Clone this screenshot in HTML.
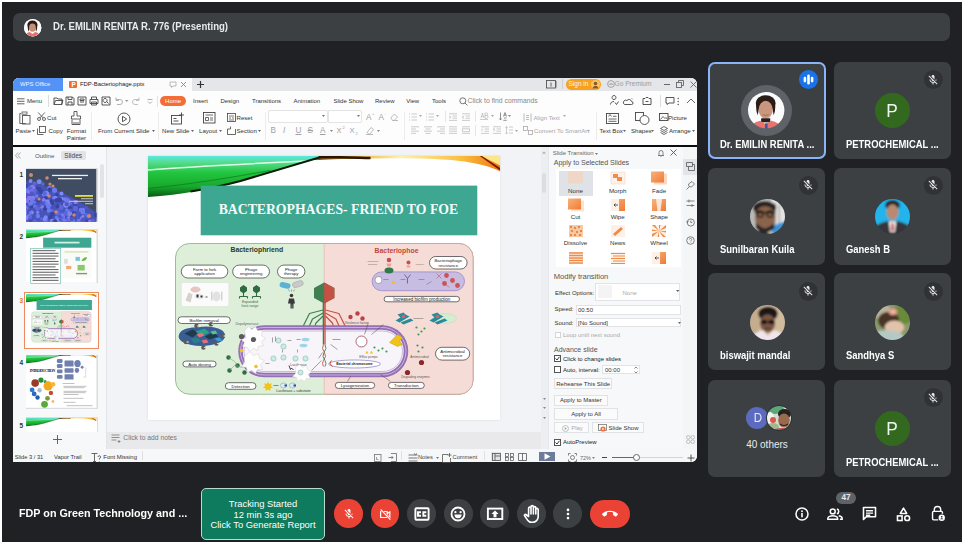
<!DOCTYPE html>
<html><head><meta charset="utf-8">
<style>
*{margin:0;padding:0;box-sizing:border-box}
html,body{width:964px;height:544px;overflow:hidden;background:#fff;font-family:"Liberation Sans",sans-serif}
.a{position:absolute}
.t{position:absolute;white-space:nowrap;line-height:1}
svg{position:absolute;overflow:visible}
</style></head>
<body>
<div class="a" style="left:2px;top:2px;width:960px;height:540px;background:#202124;"></div>
<div class="a" style="left:13px;top:13px;width:937px;height:28px;background:#3c4043;border-radius:7px;"></div>
<svg style="left:24.2px;top:18.8px" width="17.4" height="17.4" viewBox="0 0 36 36">
<defs><clipPath id="ca0"><circle cx="18" cy="18" r="18"/></clipPath></defs>
<circle cx="18" cy="18" r="18" fill="#fff"/>
<g clip-path="url(#ca0)"><rect x="-2" y="-2" width="40" height="40" fill="#fbfbfb"/>
<ellipse cx="17.5" cy="12" rx="10.5" ry="9" fill="#2a1a16"/>
<path d="M8 12 Q7 22 10 26 L12 16Z M27 12 Q28 22 25 26 L23 16Z" fill="#2a1a16"/>
<ellipse cx="17.5" cy="18" rx="7" ry="8.5" fill="#c38f78"/>
<path d="M2 38 Q4 28 12 27 L17.5 31 L23 27 Q32 28 34 38Z" fill="#e8716c"/></g></svg>
<div class="t" style="left:52.50px;top:20.77px;font-size:10.9px;color:#e8eaed;font-weight:bold;transform:scaleX(0.882);transform-origin:0 0;">Dr. EMILIN RENITA R. 776 (Presenting)</div>
<div class="a" style="left:708px;top:62px;width:118px;height:97px;background:#3c4043;border-radius:7px;border:2px solid #8ab4f8;"></div>
<div class="a" style="left:834px;top:62px;width:117px;height:97px;background:#3c4043;border-radius:7px;"></div>
<div class="a" style="left:708px;top:168px;width:117px;height:97px;background:#3c4043;border-radius:7px;"></div>
<div class="a" style="left:834px;top:168px;width:117px;height:97px;background:#3c4043;border-radius:7px;"></div>
<div class="a" style="left:708px;top:273px;width:117px;height:97px;background:#3c4043;border-radius:7px;"></div>
<div class="a" style="left:834px;top:273px;width:117px;height:97px;background:#3c4043;border-radius:7px;"></div>
<div class="a" style="left:708px;top:380px;width:117px;height:97px;background:#3c4043;border-radius:7px;"></div>
<div class="a" style="left:834px;top:380px;width:117px;height:97px;background:#3c4043;border-radius:7px;"></div>
<div class="a" style="left:798.5px;top:69.5px;width:19px;height:19px;border-radius:50%;background:#1a73e8"></div>
<svg style="left:798.5px;top:69.5px" width="19" height="19"><rect x="4.6" y="6.8" width="2.6" height="5.6" rx="1.3" fill="#fff"/><rect x="8.2" y="4.6" width="2.6" height="10" rx="1.3" fill="#fff"/><rect x="11.8" y="6.8" width="2.6" height="5.6" rx="1.3" fill="#fff"/></svg>
<div class="a" style="left:923.7px;top:70.0px;width:19px;height:19px;border-radius:50%;background:#303235"></div>
<svg style="left:927.2px;top:73.5px" width="12" height="12" viewBox="0 0 24 24"><path fill="#e8eaed" d="M19 11h-1.7c0 .74-.16 1.43-.43 2.05l1.23 1.23c.56-.98.9-2.09.9-3.28zm-4.02.17c0-.06.02-.11.02-.17V5c0-1.66-1.34-3-3-3S9 3.34 9 5v.18l5.98 5.99zM4.27 3L3 4.27l6.01 6.01V11c0 1.66 1.33 3 2.99 3 .22 0 .44-.03.65-.08l1.66 1.66c-.71.33-1.5.52-2.31.52-2.76 0-5.3-2.1-5.3-5.1H5c0 3.41 2.72 6.23 6 6.72V21h2v-3.28c.91-.13 1.77-.45 2.54-.9L19.73 21 21 19.73 4.27 3z"/></svg>
<div class="a" style="left:798.7px;top:175.7px;width:19px;height:19px;border-radius:50%;background:#303235"></div>
<svg style="left:802.2px;top:179.2px" width="12" height="12" viewBox="0 0 24 24"><path fill="#e8eaed" d="M19 11h-1.7c0 .74-.16 1.43-.43 2.05l1.23 1.23c.56-.98.9-2.09.9-3.28zm-4.02.17c0-.06.02-.11.02-.17V5c0-1.66-1.34-3-3-3S9 3.34 9 5v.18l5.98 5.99zM4.27 3L3 4.27l6.01 6.01V11c0 1.66 1.33 3 2.99 3 .22 0 .44-.03.65-.08l1.66 1.66c-.71.33-1.5.52-2.31.52-2.76 0-5.3-2.1-5.3-5.1H5c0 3.41 2.72 6.23 6 6.72V21h2v-3.28c.91-.13 1.77-.45 2.54-.9L19.73 21 21 19.73 4.27 3z"/></svg>
<div class="a" style="left:923.7px;top:175.7px;width:19px;height:19px;border-radius:50%;background:#303235"></div>
<svg style="left:927.2px;top:179.2px" width="12" height="12" viewBox="0 0 24 24"><path fill="#e8eaed" d="M19 11h-1.7c0 .74-.16 1.43-.43 2.05l1.23 1.23c.56-.98.9-2.09.9-3.28zm-4.02.17c0-.06.02-.11.02-.17V5c0-1.66-1.34-3-3-3S9 3.34 9 5v.18l5.98 5.99zM4.27 3L3 4.27l6.01 6.01V11c0 1.66 1.33 3 2.99 3 .22 0 .44-.03.65-.08l1.66 1.66c-.71.33-1.5.52-2.31.52-2.76 0-5.3-2.1-5.3-5.1H5c0 3.41 2.72 6.23 6 6.72V21h2v-3.28c.91-.13 1.77-.45 2.54-.9L19.73 21 21 19.73 4.27 3z"/></svg>
<div class="a" style="left:798.7px;top:281.5px;width:19px;height:19px;border-radius:50%;background:#303235"></div>
<svg style="left:802.2px;top:285px" width="12" height="12" viewBox="0 0 24 24"><path fill="#e8eaed" d="M19 11h-1.7c0 .74-.16 1.43-.43 2.05l1.23 1.23c.56-.98.9-2.09.9-3.28zm-4.02.17c0-.06.02-.11.02-.17V5c0-1.66-1.34-3-3-3S9 3.34 9 5v.18l5.98 5.99zM4.27 3L3 4.27l6.01 6.01V11c0 1.66 1.33 3 2.99 3 .22 0 .44-.03.65-.08l1.66 1.66c-.71.33-1.5.52-2.31.52-2.76 0-5.3-2.1-5.3-5.1H5c0 3.41 2.72 6.23 6 6.72V21h2v-3.28c.91-.13 1.77-.45 2.54-.9L19.73 21 21 19.73 4.27 3z"/></svg>
<div class="a" style="left:923.7px;top:281.5px;width:19px;height:19px;border-radius:50%;background:#303235"></div>
<svg style="left:927.2px;top:285px" width="12" height="12" viewBox="0 0 24 24"><path fill="#e8eaed" d="M19 11h-1.7c0 .74-.16 1.43-.43 2.05l1.23 1.23c.56-.98.9-2.09.9-3.28zm-4.02.17c0-.06.02-.11.02-.17V5c0-1.66-1.34-3-3-3S9 3.34 9 5v.18l5.98 5.99zM4.27 3L3 4.27l6.01 6.01V11c0 1.66 1.33 3 2.99 3 .22 0 .44-.03.65-.08l1.66 1.66c-.71.33-1.5.52-2.31.52-2.76 0-5.3-2.1-5.3-5.1H5c0 3.41 2.72 6.23 6 6.72V21h2v-3.28c.91-.13 1.77-.45 2.54-.9L19.73 21 21 19.73 4.27 3z"/></svg>
<div class="a" style="left:923.7px;top:388.0px;width:19px;height:19px;border-radius:50%;background:#303235"></div>
<svg style="left:927.2px;top:391.5px" width="12" height="12" viewBox="0 0 24 24"><path fill="#e8eaed" d="M19 11h-1.7c0 .74-.16 1.43-.43 2.05l1.23 1.23c.56-.98.9-2.09.9-3.28zm-4.02.17c0-.06.02-.11.02-.17V5c0-1.66-1.34-3-3-3S9 3.34 9 5v.18l5.98 5.99zM4.27 3L3 4.27l6.01 6.01V11c0 1.66 1.33 3 2.99 3 .22 0 .44-.03.65-.08l1.66 1.66c-.71.33-1.5.52-2.31.52-2.76 0-5.3-2.1-5.3-5.1H5c0 3.41 2.72 6.23 6 6.72V21h2v-3.28c.91-.13 1.77-.45 2.54-.9L19.73 21 21 19.73 4.27 3z"/></svg>
<div class="a" style="left:741px;top:85px;width:51px;height:51px;border-radius:50%;background:#5f6368"></div>
<svg style="left:748.2px;top:92.2px" width="36.4" height="36.4" viewBox="0 0 36 36">
<defs><clipPath id="ca1"><circle cx="18" cy="18" r="18"/></clipPath><filter id="bl1"><feGaussianBlur stdDeviation="0.6"/></filter></defs>
<g clip-path="url(#ca1)"><g filter="url(#bl1)"><rect x="-2" y="-2" width="40" height="40" fill="#fbfbfb"/>
<ellipse cx="17.5" cy="11" rx="9.8" ry="7.8" fill="#2a1a16"/>
<path d="M8.2 11 Q7.5 18 9.5 23 L11.5 14Z M26.8 11 Q27.5 18 25.5 23 L23.5 14Z" fill="#2a1a16"/>
<ellipse cx="17.5" cy="17.5" rx="7" ry="8.8" fill="#c9977e"/>
<path d="M14.5 22.5q3 1.2 6 0" stroke="#9a5a50" stroke-width="0.8" fill="none"/>
<path d="M13 26h9v4h-9z" fill="#2a1a16"/>
<path d="M1 38 Q3 30 12 28.5 L17.5 32 L23 28.5 Q32 30 35 38Z" fill="#e9736e"/>
<rect x="16.8" y="31" width="2.6" height="7" fill="#4456a0"/></g></g></svg>
<div class="a" style="left:874.5px;top:92.5px;width:35px;height:35px;border-radius:50%;background:#33691e"></div>
<div class="t" style="left:592.00px;width:600px;text-align:center;top:100.75px;font-size:19.2px;color:#f1f3f4;transform:scaleX(0.9);">P</div>
<div class="a" style="left:874.5px;top:410.5px;width:35px;height:35px;border-radius:50%;background:#33691e"></div>
<div class="t" style="left:592.00px;width:600px;text-align:center;top:418.75px;font-size:19.2px;color:#f1f3f4;transform:scaleX(0.9);">P</div>
<svg style="left:749.5px;top:198.5px" width="35" height="35" viewBox="0 0 36 36">
<defs><clipPath id="ca2"><circle cx="18" cy="18" r="18"/></clipPath><filter id="bl" x="-10%" y="-10%" width="120%" height="120%"><feGaussianBlur stdDeviation="0.9"/></filter></defs>
<g clip-path="url(#ca2)"><g filter="url(#bl)"><rect x="-2" y="-2" width="40" height="40" fill="#b9b9b7"/>
<rect x="22" y="-2" width="16" height="30" fill="#e4e4e2"/>
<path d="M26 4v22M30 6v20" stroke="#9a9a9a" stroke-width="1.2"/>
<path d="M22 28 L38 22 L38 38 L24 38Z" fill="#3a92d8"/>
<ellipse cx="15" cy="9" rx="12" ry="7" fill="#2a2420"/>
<ellipse cx="15.5" cy="19" rx="10.5" ry="11.5" fill="#8a644c"/>
<path d="M5 14h21" stroke="#161210" stroke-width="1.6"/>
<circle cx="10.5" cy="15.5" r="3.2" fill="none" stroke="#161210" stroke-width="1.3"/><circle cx="20.5" cy="15.5" r="3.2" fill="none" stroke="#161210" stroke-width="1.3"/>
<path d="M6 24 Q15.5 36 25 24 L25 30 Q15.5 38 6 30Z" fill="#2a221e"/>
<path d="M2 38 Q8 31 15 32 L22 38Z" fill="#2a2a30"/></g></g></svg>
<svg style="left:874.5px;top:198.5px" width="35" height="35" viewBox="0 0 36 36">
<defs><clipPath id="ca3"><circle cx="18" cy="18" r="18"/></clipPath><filter id="bl" x="-10%" y="-10%" width="120%" height="120%"><feGaussianBlur stdDeviation="0.9"/></filter></defs>
<g clip-path="url(#ca3)"><g filter="url(#bl)"><rect x="-2" y="-2" width="40" height="40" fill="#22b4ea"/>

<ellipse cx="18" cy="6.5" rx="7.5" ry="5.5" fill="#262222"/>
<ellipse cx="18" cy="13.5" rx="6.2" ry="8" fill="#b98a70"/>
<path d="M-2 38 L-2 30 Q4 24.5 13 22.5 L23 22.5 Q32 24.5 38 30 L38 38Z" fill="#35363a"/>
<path d="M14 23 L22 23 L20.5 34 L15.5 34Z" fill="#f2eeee"/>
<path d="M17 25 L19 25 L19.5 33 L16.5 33Z" fill="#c8343a"/></g></g></svg>
<svg style="left:749.5px;top:304.5px" width="35" height="35" viewBox="0 0 36 36">
<defs><clipPath id="ca4"><circle cx="18" cy="18" r="18"/></clipPath><filter id="bl" x="-10%" y="-10%" width="120%" height="120%"><feGaussianBlur stdDeviation="0.9"/></filter></defs>
<g clip-path="url(#ca4)"><g filter="url(#bl)"><rect x="-2" y="-2" width="40" height="40" fill="#d2bb9c"/>
<path d="M-2 -2 L12 -2 L8 38 L-2 38Z" fill="#c4ad8e"/>
<ellipse cx="18.5" cy="9" rx="10" ry="7.5" fill="#1c1818"/>
<ellipse cx="18" cy="19" rx="7.8" ry="9.5" fill="#7a5644"/>
<ellipse cx="14.5" cy="17.5" rx="3.3" ry="2.3" fill="#121010"/><ellipse cx="22" cy="17.5" rx="3.3" ry="2.3" fill="#121010"/>
<path d="M15 24h6" stroke="#2a1a18" stroke-width="1"/>
<path d="M-2 38 Q4 27 14 26 L18 32 L24 26 Q34 27 38 38Z" fill="#f0e6ea"/></g></g></svg>
<svg style="left:874.5px;top:304.5px" width="35" height="35" viewBox="0 0 36 36">
<defs><clipPath id="ca5"><circle cx="18" cy="18" r="18"/></clipPath><filter id="bl" x="-10%" y="-10%" width="120%" height="120%"><feGaussianBlur stdDeviation="0.9"/></filter></defs>
<g clip-path="url(#ca5)"><g filter="url(#bl)"><rect x="-2" y="-2" width="40" height="40" fill="#8a9a6a"/>
<ellipse cx="28" cy="10" rx="12" ry="10" fill="#6a8a3a"/>
<ellipse cx="6" cy="6" rx="10" ry="8" fill="#b8b49a"/>
<ellipse cx="14" cy="16" rx="11" ry="9" fill="#4a3428"/>
<ellipse cx="20" cy="23" rx="10" ry="7" fill="#e2c2aa"/>
<ellipse cx="12" cy="34" rx="18" ry="8" fill="#b5c9c4"/>
<ellipse cx="18.5" cy="7" rx="4.5" ry="3.5" fill="#e49a8a"/><ellipse cx="18.5" cy="7" rx="2" ry="1.5" fill="#f4c0b0"/></g></g></svg>
<div class="a" style="left:746px;top:407px;width:22px;height:22px;border-radius:50%;background:#5c6bc0"></div>
<div class="t" style="left:457.50px;width:600px;text-align:center;top:412.13px;font-size:12.6px;color:#e8eaed;transform:scaleX(0.92);">D</div>
<svg style="left:766px;top:405px" width="26" height="26" viewBox="0 0 26 26">
<defs><clipPath id="ca6"><circle cx="13" cy="13" r="12"/></clipPath><filter id="bl2"><feGaussianBlur stdDeviation="0.7"/></filter></defs>
<circle cx="13" cy="13" r="13" fill="#2e3134"/>
<g clip-path="url(#ca6)"><g filter="url(#bl2)"><rect x="-2" y="-2" width="30" height="30" fill="#d6dbd2"/>
<ellipse cx="9" cy="4" rx="9" ry="5" fill="#5aa878"/>
<ellipse cx="4" cy="13" rx="4" ry="6" fill="#f2f2ee"/>
<ellipse cx="7" cy="15" rx="3" ry="3" fill="#d8584a"/>
<ellipse cx="7" cy="22" rx="6" ry="4" fill="#a0b890"/>
<ellipse cx="18.5" cy="9" rx="6.5" ry="5" fill="#262020"/>
<ellipse cx="18" cy="15.5" rx="5.8" ry="7" fill="#9a6a50"/>
<path d="M14 19q4 3 8 0" stroke="#3a2a22" stroke-width="1.2" fill="none"/>
<ellipse cx="16" cy="27" rx="10" ry="4" fill="#b8505a"/></g></g></svg>
<div class="t" style="left:719.50px;top:138.53px;font-size:10.6px;color:#fff;font-weight:bold;transform:scaleX(0.891);transform-origin:0 0;">Dr. EMILIN RENITA ...</div>
<div class="t" style="left:845.50px;top:138.53px;font-size:10.6px;color:#fff;font-weight:bold;transform:scaleX(0.891);transform-origin:0 0;">PETROCHEMICAL ...</div>
<div class="t" style="left:719.50px;top:244.03px;font-size:10.6px;color:#fff;font-weight:bold;transform:scaleX(0.891);transform-origin:0 0;">Sunilbaran Kuila</div>
<div class="t" style="left:845.50px;top:244.03px;font-size:10.6px;color:#fff;font-weight:bold;transform:scaleX(0.891);transform-origin:0 0;">Ganesh B</div>
<div class="t" style="left:719.50px;top:350.03px;font-size:10.6px;color:#fff;font-weight:bold;transform:scaleX(0.891);transform-origin:0 0;">biswajit mandal</div>
<div class="t" style="left:845.50px;top:350.03px;font-size:10.6px;color:#fff;font-weight:bold;transform:scaleX(0.891);transform-origin:0 0;">Sandhya S</div>
<div class="t" style="left:467.00px;width:600px;text-align:center;top:439.54px;font-size:10px;color:#e8eaed;">40 others</div>
<div class="t" style="left:845.50px;top:456.53px;font-size:10.6px;color:#fff;font-weight:bold;transform:scaleX(0.891);transform-origin:0 0;">PETROCHEMICAL ...</div>
<div class="t" style="left:19.40px;top:507.79px;font-size:11px;color:#fff;font-weight:bold;transform:scaleX(0.978);transform-origin:0 0;">FDP on Green Technology and ...</div>
<div class="a" style="left:201px;top:488px;width:124px;height:52px;background:#0e7a5e;border:1px solid #b5dccd;border-radius:5px;"></div>
<div class="t" style="left:-37.00px;width:600px;text-align:center;top:499.04px;font-size:9.4px;color:#fff;">Tracking Started</div>
<div class="t" style="left:-37.00px;width:600px;text-align:center;top:509.54px;font-size:9.4px;color:#fff;">12 min 3s ago</div>
<div class="t" style="left:-37.00px;width:600px;text-align:center;top:520.04px;font-size:9.4px;color:#fff;">Click To Generate Report</div>
<div class="a" style="left:334.2px;top:499.4px;width:28.6px;height:28.6px;border-radius:50%;background:#ea4335"></div>
<div class="a" style="left:370.59999999999997px;top:499.4px;width:28.6px;height:28.6px;border-radius:50%;background:#ea4335"></div>
<div class="a" style="left:407.2px;top:499.4px;width:28.6px;height:28.6px;border-radius:50%;background:#3c4043"></div>
<div class="a" style="left:444.0px;top:499.4px;width:28.6px;height:28.6px;border-radius:50%;background:#3c4043"></div>
<div class="a" style="left:480.3px;top:499.4px;width:28.6px;height:28.6px;border-radius:50%;background:#3c4043"></div>
<div class="a" style="left:517.0px;top:499.4px;width:28.6px;height:28.6px;border-radius:50%;background:#3c4043"></div>
<div class="a" style="left:553.3000000000001px;top:499.4px;width:28.6px;height:28.6px;border-radius:50%;background:#3c4043"></div>
<div class="a" style="left:589.8px;top:499.6px;width:40px;height:28.6px;background:#ea4335;border-radius:14.3px;"></div>
<svg style="left:342.5px;top:507.7px" width="12" height="12" viewBox="0 0 24 24"><path fill="#fff" d="M19 11h-1.7c0 .74-.16 1.43-.43 2.05l1.23 1.23c.56-.98.9-2.09.9-3.28zm-4.02.17c0-.06.02-.11.02-.17V5c0-1.66-1.34-3-3-3S9 3.34 9 5v.18l5.98 5.99zM4.27 3L3 4.27l6.01 6.01V11c0 1.66 1.33 3 2.99 3 .22 0 .44-.03.65-.08l1.66 1.66c-.71.33-1.5.52-2.31.52-2.76 0-5.3-2.1-5.3-5.1H5c0 3.41 2.72 6.23 6 6.72V21h2v-3.28c.91-.13 1.77-.45 2.54-.9L19.73 21 21 19.73 4.27 3z"/></svg>
<svg style="left:378.5px;top:507.5px" width="13" height="13" viewBox="0 0 24 24"><path fill="none" stroke="#fff" stroke-width="2.2" d="M3 6.5h12v11H3z M15 10.5l5-3.5v10l-5-3.5"/><path stroke="#ea4335" stroke-width="3.5" d="M3 2.5l18 19"/><path stroke="#fff" stroke-width="2.2" d="M3 2.5l18 19"/></svg>
<svg style="left:407.5px;top:500px" width="28" height="28"><rect x="7.4" y="8.3" width="13.2" height="11.4" rx="1" fill="none" stroke="#fff" stroke-width="1.9"/><path fill="none" stroke="#fff" stroke-width="1.9" d="M13 12.2h-3v3.6h3 M18.3 12.2h-3v3.6h3"/></svg>
<svg style="left:444.3px;top:500px" width="28" height="28"><circle cx="14" cy="14" r="6.5" fill="none" stroke="#fff" stroke-width="1.8"/><circle cx="11.4" cy="12.2" r="1.15" fill="#fff"/><circle cx="16.6" cy="12.2" r="1.15" fill="#fff"/><path d="M10.4 14.6h7.2a3.6 3.6 0 0 1-7.2 0z" fill="#fff"/></svg>
<svg style="left:480.6px;top:500px" width="28" height="28"><rect x="6.9" y="8.6" width="14.4" height="10.4" fill="none" stroke="#fff" stroke-width="1.9"/><path fill="#fff" d="M14 10.4l3.6 3.5h-2.1v3.4h-3v-3.4h-2.1z"/></svg>
<svg style="left:517.3px;top:500px" width="28" height="28"><path fill="none" stroke="#fff" stroke-width="1.6" stroke-linejoin="round" stroke-linecap="round" d="M11.6 15.5V8.2a1.2 1.2 0 0 1 2.4 0V14 M14 13.5V6.8a1.2 1.2 0 0 1 2.4 0V14 M16.4 13.8V7.8a1.2 1.2 0 0 1 2.4 0V14 M18.8 14V9.6a1.2 1.2 0 0 1 2.4 0V16.5c0 3.2-2.4 5.8-5.6 5.8h-.8c-2 0-3.2-.8-4.4-2.4L7.6 15.8c-.5-.7.4-1.8 1.3-1.3l2.7 2"/></svg>
<svg style="left:560.6px;top:507px" width="14" height="14" viewBox="0 0 24 24"><circle cx="12" cy="5" r="2.3" fill="#fff"/><circle cx="12" cy="12" r="2.3" fill="#fff"/><circle cx="12" cy="19" r="2.3" fill="#fff"/></svg>
<svg style="left:601.8px;top:506px" width="16" height="16" viewBox="0 0 24 24"><path fill="#fff" d="M12 9c-1.6 0-3.15.25-4.6.72v3.1c0 .39-.23.74-.56.9-.98.49-1.87 1.12-2.66 1.85-.18.18-.43.28-.7.28-.28 0-.53-.11-.71-.29L.29 13.08c-.18-.17-.29-.42-.29-.7 0-.28.11-.53.29-.71C3.34 8.78 7.460 7 12 7s8.66 1.78 11.71 4.67c.18.18.29.43.29.71 0 .28-.11.53-.29.71l-2.48 2.48c-.18.18-.43.29-.71.29-.27 0-.52-.11-.7-.28-.79-.74-1.69-1.36-2.67-1.85-.33-.16-.56-.5-.56-.9v-3.1C15.15 9.25 13.6 9 12 9z"/></svg>
<svg style="left:793.6px;top:506px" width="16" height="16" viewBox="0 0 24 24"><circle cx="12" cy="12" r="9" fill="none" stroke="#fff" stroke-width="2.3"/><rect x="10.8" y="10.5" width="2.4" height="6.5" fill="#fff"/><circle cx="12" cy="7.8" r="1.4" fill="#fff"/></svg>
<svg style="left:826.4px;top:505px" width="18" height="18" viewBox="0 0 24 24"><circle cx="9" cy="8.5" r="3.3" fill="none" stroke="#fff" stroke-width="2"/><path fill="none" stroke="#fff" stroke-width="2" d="M2.5 19v-1.5c0-2 4-3.3 6.5-3.3s6.5 1.3 6.5 3.3V19z"/><path fill="none" stroke="#fff" stroke-width="2" d="M14.5 5.3a3.3 3.3 0 0 1 0 6.4 M17 14.4c2.3.5 4.5 1.5 4.5 3.1V19h-3"/></svg>
<svg style="left:860.5px;top:505px" width="17" height="17" viewBox="0 0 24 24"><path fill="none" stroke="#fff" stroke-width="2.2" stroke-linejoin="round" d="M3.5 3.5h17v13h-13l-4 4z"/><path stroke="#fff" stroke-width="2" d="M7 8h10 M7 11.5h10 M7 14.5h6"/></svg>
<svg style="left:894.7px;top:505.5px" width="17" height="17" viewBox="0 0 24 24"><path fill="none" stroke="#fff" stroke-width="2.2" stroke-linejoin="round" d="M12 3l4.5 7.5h-9z"/><rect x="3.5" y="14" width="6.5" height="6.5" fill="none" stroke="#fff" stroke-width="2.2"/><circle cx="17.2" cy="17.2" r="3.4" fill="none" stroke="#fff" stroke-width="2.2"/></svg>
<svg style="left:928.5px;top:505px" width="17" height="17" viewBox="0 0 24 24"><path fill="none" stroke="#fff" stroke-width="2" d="M7.5 9V6.5a4.5 4.5 0 0 1 9 0V9"/><path fill="none" stroke="#fff" stroke-width="2" d="M13 21H6.5c-.8 0-1.5-.7-1.5-1.5V10.5c0-.8.7-1.5 1.5-1.5h11c.8 0 1.5.7 1.5 1.5v2"/><circle cx="18" cy="18" r="4.5" fill="#fff"/><circle cx="18" cy="16.6" r="1.2" fill="#202124"/><path fill="#202124" d="M15.8 20.2c.4-1 1.2-1.5 2.2-1.5s1.8.5 2.2 1.5z"/></svg>
<div class="a" style="left:836px;top:492px;width:20px;height:11.5px;background:#5f6368;border-radius:6px;"></div>
<div class="t" style="left:546.00px;width:600px;text-align:center;top:494.26px;font-size:8.2px;color:#e8eaed;font-weight:bold;">47</div>

<div class="a" style="left:13px;top:77.5px;width:684px;height:384px;background:#f6f7f9;border-radius:6px 6px 6px 0;overflow:hidden;"></div>
<div class="a" style="left:13px;top:77.5px;width:684px;height:13.5px;background:#e5e6ea;border-radius:6px 6px 0 0;"></div>
<div class="a" style="left:13.2px;top:77.5px;width:49.8px;height:13.3px;background:#5592f6;border-radius:6px 0 0 0;"></div>
<div class="t" style="left:20.00px;top:81.61px;font-size:5.9px;color:#eef4ff;">WPS Office</div>
<div class="a" style="left:63px;top:77.5px;width:129px;height:13.3px;background:#fbfbfc;"></div>
<div class="a" style="left:69.3px;top:80.6px;width:8px;height:7.5px;background:#f06b35;border-radius:1px;"></div>
<div class="t" style="left:71.40px;top:81.97px;font-size:6.3px;color:#fff;font-weight:bold;">P</div>
<div class="t" style="left:80.00px;top:82.01px;font-size:5.9px;color:#222;">FDP-Bacteriophage.pptx</div>
<svg style="left:168.5px;top:81px" width="8" height="7"><path d="M1 1h6v4h-3l-1.5 1.5V5H1z" fill="none" stroke="#aaa" stroke-width="0.8"/></svg>
<svg style="left:179.5px;top:80.5px" width="7" height="7"><path d="M1 1l5 5M6 1l-5 5" stroke="#888" stroke-width="0.9"/></svg>
<svg style="left:197.2px;top:80.5px" width="7" height="7"><path d="M3.5 0v7M0 3.5h7" stroke="#333" stroke-width="1.2"/></svg>
<svg style="left:546px;top:80px" width="12" height="9"><rect x="0.5" y="0.5" width="9" height="7.5" fill="none" stroke="#555" stroke-width="0.9"/><path d="M5 2.5v4" stroke="#555" stroke-width="0.9"/><path d="M10.5 1v6.5" stroke="#999" stroke-width="0.8"/></svg>
<div class="a" style="left:562px;top:79px;width:0.8px;height:10px;background:#cfd0d4;"></div>
<div class="a" style="left:565.8px;top:78.7px;width:35px;height:11.3px;background:#f6a21e;border-radius:6px;"></div>
<div class="t" style="left:568.50px;top:81.30px;font-size:6.5px;color:#fff6e6;">Sign in</div>
<div class="a" style="left:590.5px;top:79.8px;width:9px;height:9px;border-radius:50%;background:#f9c36a"></div>
<svg style="left:591.5px;top:80.5px" width="7" height="8"><circle cx="3.5" cy="2.5" r="1.8" fill="#8a5a20"/><path d="M0.5 7.5c.5-2 1.5-2.8 3-2.8s2.5.8 3 2.8z" fill="#8a5a20"/></svg>
<svg style="left:606.5px;top:80.3px" width="8" height="8"><circle cx="4" cy="4" r="3.4" fill="none" stroke="#999" stroke-width="0.9"/><path d="M2 3.5l1 1.5 1-2 1 2 1-1.5" fill="none" stroke="#999" stroke-width="0.7"/></svg>
<div class="t" style="left:614.50px;top:81.41px;font-size:6.6px;color:#9a9ba0;">Go Premium</div>
<div class="a" style="left:663.5px;top:84px;width:6px;height:0.9px;background:#666;"></div>
<svg style="left:676px;top:80px" width="8" height="8"><rect x="0.5" y="2.5" width="5" height="5" fill="none" stroke="#666" stroke-width="0.9"/><path d="M2.5 2.5v-2h5v5h-2" fill="none" stroke="#666" stroke-width="0.9"/></svg>
<svg style="left:690px;top:80.5px" width="7" height="7"><path d="M0.5 0.5l6 6M6.5 0.5l-6 6" stroke="#666" stroke-width="0.9"/></svg>
<div class="a" style="left:13px;top:90.8px;width:684px;height:54px;background:#fdfdfd;"></div>
<svg style="left:17px;top:97.5px" width="8" height="7"><path d="M0 .8h7.5M0 3.3h7.5M0 5.8h7.5" stroke="#555" stroke-width="0.9"/></svg>
<div class="t" style="left:27.00px;top:98.22px;font-size:6.0px;color:#333;">Menu</div>
<div class="a" style="left:48px;top:95px;width:0.8px;height:12px;background:#dcdcdc;"></div>
<svg style="left:52.5px;top:96px" width="10" height="10" viewBox="0 0 10 10"><path d="M1 2h3l1 1h4v5.5H1z M1 8.5l1.5-4h7.5l-1.5 4" fill="none" stroke="#444" stroke-width="0.9" stroke-linejoin="round"/></svg>
<svg style="left:64.5px;top:96px" width="10" height="10" viewBox="0 0 10 10"><path d="M1 1h6.5l1.5 1.5V9H1z M3 1v2.5h4V1 M3 9V6h4v3" fill="none" stroke="#444" stroke-width="0.9" stroke-linejoin="round"/></svg>
<svg style="left:76.5px;top:96px" width="10" height="10" viewBox="0 0 10 10"><path d="M1 1h8v8H1z M3 3h4v1.5H3z M3 6h4" fill="none" stroke="#444" stroke-width="0.9" stroke-linejoin="round"/></svg>
<svg style="left:89px;top:96px" width="10" height="10" viewBox="0 0 10 10"><path d="M2.5 3.5V1h5v2.5 M1 3.5h8v4H1z M2.5 6h5v3h-5z" fill="none" stroke="#444" stroke-width="0.9" stroke-linejoin="round"/></svg>
<svg style="left:101px;top:96px" width="10" height="10" viewBox="0 0 10 10"><path d="M1 1h8v8H1z M4 6.5a2 2 0 1 1 .1 0 M5.5 5.5l2 2" fill="none" stroke="#444" stroke-width="0.9" stroke-linejoin="round"/></svg>
<svg style="left:114px;top:96px" width="10" height="10" viewBox="0 0 10 10"><path d="M2 3.5h4a2.5 2.5 0 0 1 0 5H3 M2 1.5v3h3" fill="none" stroke="#aaa" stroke-width="0.9" stroke-linejoin="round"/></svg>
<svg style="left:131px;top:96px" width="10" height="10" viewBox="0 0 10 10"><path d="M8 3.5H4a2.5 2.5 0 0 0 0 5h3 M8 1.5v3H5" fill="none" stroke="#bbb" stroke-width="0.9" stroke-linejoin="round"/></svg>
<svg style="left:124.5px;top:100px" width="4" height="3"><path d="M0 0h3.5L1.75 2z" fill="#999"/></svg>
<svg style="left:147px;top:98px" width="6" height="7"><path d="M.5 1.5h5M1 3.5l2 2 2-2" fill="none" stroke="#999" stroke-width="0.8"/></svg>
<div class="a" style="left:160.2px;top:95.8px;width:25.8px;height:10.4px;background:#f36d38;border-radius:5.2px;"></div>
<div class="a" style="left:156.5px;top:95.5px;width:0.7px;height:11px;background:#e2e2e2;"></div>
<div class="t" style="left:-126.90px;width:600px;text-align:center;top:98.22px;font-size:6.0px;color:#fff;">Home</div>
<div class="t" style="left:193.00px;top:98.22px;font-size:6.0px;color:#333;">Insert</div>
<div class="t" style="left:220.40px;top:98.22px;font-size:6.0px;color:#333;">Design</div>
<div class="t" style="left:252.00px;top:98.22px;font-size:6.0px;color:#333;">Transitions</div>
<div class="t" style="left:293.50px;top:98.22px;font-size:6.0px;color:#333;">Animation</div>
<div class="t" style="left:333.40px;top:98.22px;font-size:6.0px;color:#333;">Slide Show</div>
<div class="t" style="left:375.00px;top:98.22px;font-size:6.0px;color:#333;">Review</div>
<div class="t" style="left:406.30px;top:98.22px;font-size:6.0px;color:#333;">View</div>
<div class="t" style="left:432.00px;top:98.22px;font-size:6.0px;color:#333;">Tools</div>
<svg style="left:458.5px;top:96.5px" width="9" height="9"><circle cx="3.8" cy="3.8" r="3" fill="none" stroke="#666" stroke-width="0.9"/><path d="M6 6l2.5 2.5" stroke="#666" stroke-width="0.9"/></svg>
<div class="t" style="left:467.50px;top:97.54px;font-size:6.8px;color:#888;">Click to find commands</div>
<svg style="left:609px;top:96px" width="10" height="10" viewBox="0 0 10 10"><path d="M3 1.5a2 2 0 1 1 0 .1 M1.5 8.5c0-2 1.5-3 3.5-3 M6 6.5l1.5 2 2-3" fill="none" stroke="#444" stroke-width="0.9" stroke-linejoin="round"/></svg>
<svg style="left:623px;top:96px" width="10" height="10" viewBox="0 0 10 10"><path d="M1.5 8.5h7a1.5 1.5 0 0 0 0-3 2.5 2.5 0 0 0-4.5-1 2 2 0 0 0-2.5 4 M8.8 2.5l.8.8" fill="none" stroke="#444" stroke-width="0.9" stroke-linejoin="round"/></svg>
<svg style="left:642px;top:96px" width="10" height="10" viewBox="0 0 10 10"><path d="M1 2.5h2l1-1h2l1 1h2v6H1z M3.5 5.5h3" fill="none" stroke="#444" stroke-width="0.9" stroke-linejoin="round"/></svg>
<div class="a" style="left:659.5px;top:95px;width:0.8px;height:12px;background:#dcdcdc;"></div>
<svg style="left:665px;top:96px" width="10" height="10" viewBox="0 0 10 10"><path d="M1 1.5h8v5.5H4L2 8.5V7H1z" fill="none" stroke="#444" stroke-width="0.9" stroke-linejoin="round"/></svg>
<svg style="left:677px;top:96.5px" width="3" height="10"><circle cx="1.2" cy="1.5" r=".8" fill="#666"/><circle cx="1.2" cy="4.5" r=".8" fill="#666"/><circle cx="1.2" cy="7.5" r=".8" fill="#666"/></svg>
<svg style="left:686px;top:98px" width="10" height="6"><path d="M1 5l4-4 4 4" fill="none" stroke="#555" stroke-width="0.9"/></svg>
<svg style="left:18.5px;top:111px" width="12" height="14" viewBox="0 0 12 14"><path d="M2 2.5H.8v10h6" fill="none" stroke="#555" stroke-width="0.9"/><rect x="3.5" y="4.5" width="7.5" height="8.5" fill="none" stroke="#555" stroke-width="0.9"/><rect x="3" y="1" width="5" height="2.2" fill="none" stroke="#555" stroke-width="0.8"/></svg>
<div class="t" style="left:15.50px;top:127.84px;font-size:6.1px;color:#333;">Paste</div>
<svg style="left:32px;top:130px" width="4" height="3"><path d="M0 0h3L1.5 2z" fill="#666"/></svg>
<svg style="left:36.5px;top:112px" width="9" height="9"><circle cx="2" cy="7" r="1.5" fill="none" stroke="#444" stroke-width="0.8"/><circle cx="7" cy="7" r="1.5" fill="none" stroke="#444" stroke-width="0.8"/><path d="M2.8 6l5-5.5M6.2 6l-5-5.5" stroke="#444" stroke-width="0.8"/></svg>
<div class="t" style="left:47.00px;top:114.84px;font-size:6.1px;color:#333;">Cut</div>
<svg style="left:36.5px;top:125.5px" width="9" height="9"><rect x="2.5" y="0.5" width="6" height="6" fill="none" stroke="#444" stroke-width="0.8"/><path d="M.5 2.5v6h6" fill="none" stroke="#444" stroke-width="0.8"/></svg>
<div class="t" style="left:48.50px;top:127.84px;font-size:6.1px;color:#333;">Copy</div>
<svg style="left:71px;top:111px" width="10" height="14"><path d="M3 .5h3v4.5h3.5v3H.5V5h2.5z M1 8.5v5h8v-5 M3 11v2.5M5 11v2.5M7 11v2.5" fill="none" stroke="#444" stroke-width="0.85"/></svg>
<div class="t" style="left:-223.50px;width:600px;text-align:center;top:127.84px;font-size:6.1px;color:#333;">Format</div>
<div class="t" style="left:-223.50px;width:600px;text-align:center;top:134.64px;font-size:6.1px;color:#333;">Painter</div>
<div class="a" style="left:91px;top:112px;width:0.7px;height:28px;background:#ececec;"></div>
<svg style="left:117px;top:112px" width="14" height="14"><circle cx="7" cy="7" r="6" fill="none" stroke="#444" stroke-width="0.9"/><path d="M5.5 4.3v5.4l4.2-2.7z" fill="none" stroke="#444" stroke-width="0.9"/></svg>
<div class="t" style="left:98.00px;top:127.84px;font-size:6.1px;color:#333;">From Current Slide</div>
<svg style="left:152px;top:130px" width="4" height="3"><path d="M0 0h3L1.5 2z" fill="#666"/></svg>
<div class="a" style="left:157.5px;top:112px;width:0.7px;height:28px;background:#ececec;"></div>
<svg style="left:170.5px;top:111.5px" width="14" height="13"><rect x="0.5" y="3.5" width="10" height="8.5" fill="none" stroke="#444" stroke-width="0.9"/><path d="M2.5 6.5h3M2.5 9h5M10.5 0.5v5M8 3h5" fill="none" stroke="#444" stroke-width="0.9"/></svg>
<div class="t" style="left:162.00px;top:127.84px;font-size:6.1px;color:#333;">New Slide</div>
<svg style="left:191px;top:130px" width="4" height="3"><path d="M0 0h3L1.5 2z" fill="#666"/></svg>
<svg style="left:203px;top:112px" width="13" height="12"><rect x="0.5" y="0.5" width="11.5" height="10.5" fill="none" stroke="#444" stroke-width="0.9"/><path d="M2.5 3h7.5M2.5 5.5h3v3h-3zM7 6h3M7 8h3" fill="none" stroke="#444" stroke-width="0.8"/></svg>
<div class="t" style="left:199.00px;top:127.84px;font-size:6.1px;color:#333;">Layout</div>
<svg style="left:219px;top:130px" width="4" height="3"><path d="M0 0h3L1.5 2z" fill="#666"/></svg>
<svg style="left:226.5px;top:113px" width="9" height="9"><rect x="0.5" y="0.5" width="8" height="8" fill="none" stroke="#444" stroke-width="0.8"/><path d="M2 3h5M2 5h2M5 5h2M2 7h5" stroke="#444" stroke-width="0.7"/></svg>
<div class="t" style="left:236.50px;top:114.84px;font-size:6.1px;color:#333;">Reset</div>
<svg style="left:226.5px;top:126px" width="9" height="9"><path d="M.5 3v5.5h8V3 M.5 3h3V.5" fill="none" stroke="#444" stroke-width="0.8"/></svg>
<div class="t" style="left:236.50px;top:127.84px;font-size:6.1px;color:#333;">Section</div>
<svg style="left:258px;top:130px" width="4" height="3"><path d="M0 0h3L1.5 2z" fill="#666"/></svg>
<div class="a" style="left:264.5px;top:112px;width:0.7px;height:28px;background:#ececec;"></div>
<div class="a" style="left:268px;top:110px;width:60px;height:13px;background:#fff;border:0.8px solid #e4e4e4;border-radius:2px;"></div>
<div class="a" style="left:327.5px;top:110px;width:34px;height:13px;background:#fff;border:0.8px solid #e4e4e4;border-radius:0 2px 2px 0;"></div>
<svg style="left:321.5px;top:115px" width="4" height="3"><path d="M0 0h3L1.5 2z" fill="#777"/></svg>
<svg style="left:356.5px;top:115px" width="4" height="3"><path d="M0 0h3L1.5 2z" fill="#777"/></svg>
<div class="t" style="left:366.00px;top:113.56px;font-size:8.2px;color:#9fa0a4;">A</div>
<div class="t" style="left:372.00px;top:112.11px;font-size:4px;color:#9fa0a4;">+</div>
<div class="t" style="left:378.50px;top:113.56px;font-size:8.2px;color:#9fa0a4;">A</div>
<div class="t" style="left:384.50px;top:112.11px;font-size:4px;color:#9fa0a4;">-</div>
<svg style="left:390px;top:113px" width="9" height="8"><path d="M3 7.5h5M1 4.5l3.5-3.5 3 3-3.5 3.5h-1.5z" fill="none" stroke="#aaa" stroke-width="0.8"/></svg>
<div class="t" style="left:270.50px;top:126.86px;font-size:8.2px;color:#9fa0a4;">B</div>
<div class="t" style="left:283.00px;top:126.86px;font-size:8.2px;color:#9fa0a4;font-style:italic;">I</div>
<div class="t" style="left:295.50px;top:126.86px;font-size:8.2px;color:#9fa0a4;text-decoration:underline;">U</div>
<div class="t" style="left:307.50px;top:126.86px;font-size:8.2px;color:#9fa0a4;text-decoration:line-through;">S</div>
<div class="t" style="left:320.00px;top:126.86px;font-size:8.2px;color:#9fa0a4;text-decoration:underline;">A</div>
<svg style="left:330px;top:130px" width="4" height="3"><path d="M0 0h3L1.5 2z" fill="#888"/></svg>
<div class="t" style="left:336.50px;top:127.37px;font-size:7.6px;color:#9fa0a4;">X</div>
<div class="t" style="left:342.50px;top:126.11px;font-size:4px;color:#9fa0a4;">2</div>
<div class="t" style="left:349.50px;top:127.37px;font-size:7.6px;color:#9fa0a4;">X</div>
<div class="t" style="left:355.50px;top:132.11px;font-size:4px;color:#9fa0a4;">2</div>
<svg style="left:365px;top:126px" width="10" height="9"><path d="M1 8.5h7M2 6.5l4-5 2.5 2-4 5z" fill="none" stroke="#aaa" stroke-width="0.8"/></svg>
<svg style="left:376.5px;top:130px" width="4" height="3"><path d="M0 0h3L1.5 2z" fill="#888"/></svg>
<div class="a" style="left:403.5px;top:112px;width:0.7px;height:28px;background:#ececec;"></div>
<svg style="left:409px;top:112.5px" width="8" height="8" viewBox="0 0 8 8"><path d="M0 1h1M2.5 1h5.5M0 4h1M2.5 4h5.5M0 7h1M2.5 7h5.5" stroke="#bdbec2" stroke-width="0.8" fill="none"/></svg>
<svg style="left:419px;top:115px" width="4" height="3"><path d="M0 0h3L1.5 2z" fill="#aaa"/></svg>
<svg style="left:426px;top:112.5px" width="8" height="8" viewBox="0 0 8 8"><path d="M0 1h1M2.5 1h5.5M0 4h1M2.5 4h5.5M0 7h1M2.5 7h5.5" stroke="#bdbec2" stroke-width="0.8" fill="none"/></svg>
<svg style="left:436px;top:115px" width="4" height="3"><path d="M0 0h3L1.5 2z" fill="#aaa"/></svg>
<div class="a" style="left:444.5px;top:111px;width:0.7px;height:11px;background:#e6e6e6;"></div>
<svg style="left:448.5px;top:112.5px" width="8" height="8" viewBox="0 0 8 8"><path d="M0 .8h8M3.5 3h4.5M3.5 5.2h4.5M0 7.4h8M0 3l2 1.2-2 1.2" stroke="#bdbec2" stroke-width="0.8" fill="none"/></svg>
<svg style="left:462px;top:112.5px" width="8" height="8" viewBox="0 0 8 8"><path d="M0 .8h8M3.5 3h4.5M3.5 5.2h4.5M0 7.4h8M2 3l-2 1.2 2 1.2" stroke="#bdbec2" stroke-width="0.8" fill="none"/></svg>
<div class="a" style="left:475px;top:111px;width:0.7px;height:11px;background:#e6e6e6;"></div>
<svg style="left:480px;top:112px" width="9" height="9" viewBox="0 0 9 9"><path d="M0 7.5h8M1 6l1.5-5 1.5 5M1.6 4.3h1.8M5 1v5.5M5 1h1.5a1.2 1.2 0 0 1 0 2.5H5h1.7a1.4 1.4 0 0 1 0 2.8H5" stroke="#bdbec2" stroke-width="0.8" fill="none"/></svg>
<svg style="left:490.5px;top:115px" width="4" height="3"><path d="M0 0h3L1.5 2z" fill="#aaa"/></svg>
<svg style="left:498.5px;top:112px" width="9" height="9" viewBox="0 0 9 9"><path d="M1.5 .5v7.5M.3 6.5l1.2 1.5 1.2-1.5M4.5 4.5l1.5-4 1.5 4M5 3.2h2M4.3 8.3h3.4M5 6h2.5" stroke="#777" stroke-width="0.8" fill="none"/></svg>
<svg style="left:508px;top:115px" width="4" height="3"><path d="M0 0h3L1.5 2z" fill="#888"/></svg>
<svg style="left:411.3px;top:126px" width="8" height="8" viewBox="0 0 8 8"><path d="M0 .8h8M0 3h5M0 5.2h8M0 7.4h5" stroke="#bdbec2" stroke-width="0.8" fill="none"/></svg>
<svg style="left:423.8px;top:126px" width="8" height="8" viewBox="0 0 8 8"><path d="M0 .8h8M1.5 3h5M0 5.2h8M1.5 7.4h5" stroke="#bdbec2" stroke-width="0.8" fill="none"/></svg>
<svg style="left:437px;top:126px" width="8" height="8" viewBox="0 0 8 8"><path d="M0 .8h8M3 3h5M0 5.2h8M3 7.4h5" stroke="#bdbec2" stroke-width="0.8" fill="none"/></svg>
<svg style="left:449.4px;top:126px" width="8" height="8" viewBox="0 0 8 8"><path d="M0 .8h8M0 3h8M0 5.2h8M0 7.4h8" stroke="#bdbec2" stroke-width="0.8" fill="none"/></svg>
<svg style="left:462px;top:126px" width="8" height="8" viewBox="0 0 8 8"><path d="M0 .8h8M0 7.4h8M.5 2.8h7v2.8h-7z" stroke="#bdbec2" stroke-width="0.8" fill="none"/></svg>
<div class="a" style="left:475px;top:125px;width:0.7px;height:11px;background:#e6e6e6;"></div>
<svg style="left:480.5px;top:126px" width="8" height="8" viewBox="0 0 8 8"><path d="M0 .8h8M3.5 3h4.5M3.5 5.2h4.5M0 7.4h8M1 2.5v3" stroke="#bdbec2" stroke-width="0.8" fill="none"/></svg>
<svg style="left:493px;top:126px" width="8" height="8" viewBox="0 0 8 8"><path d="M0 .8h8M3.5 3h4.5M3.5 5.2h4.5M0 7.4h8M1 2.5v3M.2 3.3l.8-.8.8.8" stroke="#bdbec2" stroke-width="0.8" fill="none"/></svg>
<svg style="left:505.4px;top:126px" width="8" height="8" viewBox="0 0 8 8"><path d="M1.5 .5v7.5M.3 1.8l1.2-1.3 1.2 1.3M.3 6.7l1.2 1.3 1.2-1.3M4 1h4M4 4h4M4 7h4" stroke="#bdbec2" stroke-width="0.8" fill="none"/></svg>
<svg style="left:514.5px;top:129.5px" width="4" height="3"><path d="M0 0h3L1.5 2z" fill="#aaa"/></svg>
<svg style="left:522.5px;top:112.5px" width="9" height="9"><path d="M1 .5v8M8 .5v8M3 2.5h3M3 4.5h3M3 6.5h3" stroke="#aaa" stroke-width="0.8" fill="none"/></svg>
<div class="t" style="left:533.50px;top:114.84px;font-size:6.1px;color:#a5a6aa;">Align Text</div>
<svg style="left:562.5px;top:115px" width="4" height="3"><path d="M0 0h3L1.5 2z" fill="#aaa"/></svg>
<svg style="left:522.5px;top:126px" width="10" height="9"><rect x=".5" y=".5" width="4" height="4" fill="none" stroke="#aaa" stroke-width="0.8"/><rect x="5.5" y="4.5" width="4" height="4" fill="none" stroke="#aaa" stroke-width="0.8"/></svg>
<div class="t" style="left:534.00px;top:127.84px;font-size:6.1px;color:#a5a6aa;">Convert To SmartArt</div>
<svg style="left:587px;top:130px" width="4" height="3"><path d="M0 0h3L1.5 2z" fill="#aaa"/></svg>
<div class="a" style="left:595.5px;top:112px;width:0.7px;height:28px;background:#ececec;"></div>
<svg style="left:606px;top:112.5px" width="13" height="11"><rect x=".5" y=".5" width="12" height="10" fill="none" stroke="#444" stroke-width="0.9"/><path d="M2.5 3.5l1.5-2 1.5 2M2.5 6h8M2.5 8.3h8M7 3.3h3.5" stroke="#444" stroke-width="0.8" fill="none"/></svg>
<div class="t" style="left:599.50px;top:127.84px;font-size:6.1px;color:#333;">Text Box</div>
<svg style="left:622.5px;top:130px" width="4" height="3"><path d="M0 0h3L1.5 2z" fill="#666"/></svg>
<svg style="left:635px;top:112px" width="15" height="13"><rect x=".5" y=".5" width="8" height="8" fill="none" stroke="#444" stroke-width="0.9"/><circle cx="9.5" cy="8" r="4.5" fill="#fdfdfd" stroke="#444" stroke-width="0.9"/></svg>
<div class="t" style="left:631.00px;top:127.84px;font-size:6.1px;color:#333;">Shapes</div>
<svg style="left:650.5px;top:130px" width="4" height="3"><path d="M0 0h3L1.5 2z" fill="#666"/></svg>
<svg style="left:659px;top:113px" width="10" height="8"><rect x=".5" y=".5" width="8.5" height="7" fill="none" stroke="#444" stroke-width="0.9"/><path d="M1.5 6.5l2.5-3 2 2 1-1 1.5 2" fill="none" stroke="#444" stroke-width="0.8"/></svg>
<div class="t" style="left:668.00px;top:114.84px;font-size:6.1px;color:#333;">Picture</div>
<svg style="left:659.5px;top:125.5px" width="8" height="9"><path d="M.5 2.5l3.5-2 3.5 2-3.5 2zM.5 4.5l3.5 2 3.5-2M.5 6.5l3.5 2 3.5-2" fill="none" stroke="#444" stroke-width="0.8"/></svg>
<div class="t" style="left:669.00px;top:127.84px;font-size:6.1px;color:#333;">Arrange</div>
<svg style="left:692px;top:130px" width="4" height="3"><path d="M0 0h3L1.5 2z" fill="#666"/></svg>
<div class="a" style="left:13px;top:144.6px;width:684px;height:2.6px;background:#0c0c0c;"></div>
<div class="a" style="left:13px;top:147.2px;width:93px;height:301.4px;background:#f7f8fa;"></div>
<div class="a" style="left:106px;top:147.2px;width:0.8px;height:301.4px;background:#e3e4e7;"></div>
<div class="a" style="left:106.8px;top:147.2px;width:441.2px;height:284.6px;background:#f1f3f6;"></div>
<div class="a" style="left:106.8px;top:431.8px;width:441.2px;height:16.8px;background:#e9e9ec;"></div>
<svg style="left:111px;top:433.5px" width="10" height="9"><path d="M.5 1h8M.5 3.5h8M.5 6h5M6.5 7.5h3M8 6v3" stroke="#777" stroke-width="0.8" fill="none"/></svg>
<div class="t" style="left:123.30px;top:434.59px;font-size:6.75px;color:#777;">Click to add notes</div>
<svg style="left:14.5px;top:152px" width="6" height="7"><path d="M3 .5L.5 3.5 3 6.5M5.5 .5L3 3.5l2.5 3" fill="none" stroke="#888" stroke-width="0.7"/></svg>
<div class="t" style="left:34.90px;top:152.99px;font-size:6.15px;color:#555;">Outline</div>
<div class="a" style="left:61px;top:151px;width:24.5px;height:9.4px;background:#e1e3e8;border-radius:2px;"></div>
<div class="t" style="left:-226.80px;width:600px;text-align:center;top:152.70px;font-size:6.5px;color:#444;">Slides</div>
<div class="a" style="left:100.2px;top:164.3px;width:3.5px;height:34px;background:#e2e3e6;border-radius:2px;"></div>
<div class="t" style="left:19.50px;top:172.00px;font-size:6.5px;color:#333;font-weight:bold;">1</div>
<div class="t" style="left:19.50px;top:234.00px;font-size:6.5px;color:#333;font-weight:bold;">2</div>
<div class="t" style="left:19.50px;top:297.50px;font-size:6.5px;color:#e8713c;font-weight:bold;">3</div>
<div class="t" style="left:19.50px;top:360.00px;font-size:6.5px;color:#333;font-weight:bold;">4</div>
<div class="t" style="left:19.50px;top:422.80px;font-size:6.5px;color:#333;font-weight:bold;">5</div>
<svg style="left:53px;top:435px" width="9" height="9"><path d="M4.5 0v9M0 4.5h9" stroke="#555" stroke-width="0.9"/></svg>
<div class="a" style="left:540.6px;top:147.2px;width:7.4px;height:301.4px;background:#eceef1;"></div>
<svg style="left:542px;top:150.5px" width="4" height="3"><path d="M0 2.5L2 0.5 4 2.5z" fill="#aaa"/></svg>
<div class="a" style="left:541.5px;top:172.6px;width:4.5px;height:20px;background:#dcdde0;border-radius:2px;"></div>
<svg style="left:542.5px;top:397.5px" width="4" height="3"><path d="M0 0h3L1.5 2z" fill="#888"/></svg>
<svg style="left:542.5px;top:407px" width="4" height="3"><path d="M0 0h3L1.5 2z" fill="#888"/></svg>
<svg style="left:542.5px;top:416.5px" width="4" height="3"><path d="M0 0h3L1.5 2z" fill="#888"/></svg>
<div class="a" style="left:13px;top:448.6px;width:684px;height:13px;background:#f6f7f9;border-radius:0 0 6px 0;"></div>
<div class="t" style="left:14.80px;top:455.37px;font-size:5.7px;color:#333;">Slide 3 / 31</div>
<div class="t" style="left:54.00px;top:455.29px;font-size:5.8px;color:#333;">Vapor Trail</div>
<svg style="left:91px;top:453px" width="10" height="9"><path d="M.5 .5h6M3.5 .5v8M2 8.5h3M7 4a1.3 1.3 0 1 1 1.5 1.3V6.5M8.4 8v.5" fill="none" stroke="#444" stroke-width="0.8"/></svg>
<div class="t" style="left:103.30px;top:455.16px;font-size:5.95px;color:#333;">Font Missing</div>
<div class="a" style="left:142px;top:451px;width:0.7px;height:9px;background:#e0e0e0;"></div>
<svg style="left:374px;top:453.5px" width="8" height="8"><rect x=".5" y=".5" width="6.5" height="7" fill="none" stroke="#777" stroke-width="0.8"/><path d="M2.5 3v2.5h2" fill="none" stroke="#777" stroke-width="0.7"/></svg>
<svg style="left:387.5px;top:453px" width="9" height="9"><path d="M3 .5h5.5v8H3M.5 4.5h4.5M3.5 3l1.5 1.5L3.5 6" fill="none" stroke="#666" stroke-width="0.8"/></svg>
<div class="a" style="left:401.4px;top:451px;width:0.7px;height:9px;background:#e0e0e0;"></div>
<svg style="left:407.5px;top:453px" width="10" height="9"><path d="M.5 2h9M.5 5h9M.5 8h9M6 .5l1.5 1.2L9 .5" fill="none" stroke="#555" stroke-width="0.8"/></svg>
<div class="t" style="left:418.00px;top:455.37px;font-size:5.7px;color:#444;">Notes</div>
<svg style="left:435.5px;top:456.5px" width="4" height="3"><path d="M0 0h3L1.5 2z" fill="#777"/></svg>
<svg style="left:441.5px;top:452.5px" width="10" height="10"><path d="M6 1.5H.5v8h8V5M7.5 0v4M5.5 2h4" fill="none" stroke="#555" stroke-width="0.8"/></svg>
<div class="t" style="left:452.60px;top:455.37px;font-size:5.7px;color:#444;">Comment</div>
<div class="a" style="left:484.3px;top:451px;width:0.7px;height:9px;background:#e0e0e0;"></div>
<div class="a" style="left:490.5px;top:451.5px;width:10px;height:9.5px;background:#e0e2e6;"></div>
<svg style="left:491.5px;top:452.5px" width="9" height="8"><rect x=".5" y=".5" width="8" height="7" fill="none" stroke="#555" stroke-width="0.8"/><path d="M3 .5v7M3 3h5.5" stroke="#555" stroke-width="0.8"/></svg>
<svg style="left:505px;top:452.5px" width="9" height="8"><rect x=".5" y=".5" width="3" height="3" fill="none" stroke="#555" stroke-width="0.7"/><rect x="5.5" y=".5" width="3" height="3" fill="none" stroke="#555" stroke-width="0.7"/><rect x=".5" y="4.5" width="3" height="3" fill="none" stroke="#555" stroke-width="0.7"/><rect x="5.5" y="4.5" width="3" height="3" fill="none" stroke="#555" stroke-width="0.7"/></svg>
<svg style="left:517.5px;top:452.5px" width="9" height="8"><path d="M.5 .5h8v7h-8zM4.5 .5v7" fill="none" stroke="#555" stroke-width="0.8"/></svg>
<div class="a" style="left:539.2px;top:451.7px;width:15.5px;height:9.8px;background:#6d7c9a;"></div>
<svg style="left:543.5px;top:453.3px" width="7" height="7"><path d="M.5 .3v6.4L6.5 3.5z" fill="#fff"/></svg>
<svg style="left:567.5px;top:452.5px" width="9" height="9"><path d="M.5 2.5V.5h2M6.5 .5h2v2M8.5 6.5v2h-2M2.5 8.5h-2v-2" fill="none" stroke="#666" stroke-width="0.8"/><circle cx="4.5" cy="4.5" r="2" fill="none" stroke="#666" stroke-width="0.8"/></svg>
<div class="t" style="left:580.00px;top:455.54px;font-size:5.5px;color:#666;">72%</div>
<svg style="left:592px;top:456.5px" width="4" height="3"><path d="M0 0h3L1.5 2z" fill="#888"/></svg>
<div class="a" style="left:601.5px;top:456.8px;width:5px;height:1px;background:#444;"></div>
<div class="a" style="left:612px;top:457px;width:24px;height:1px;background:#666;"></div>
<div class="a" style="left:636px;top:457px;width:46.6px;height:1px;background:#d6d6d6;"></div>
<div class="a" style="left:633.3px;top:454px;width:7px;height:7px;border-radius:50%;background:#fff;border:0.9px solid #666"></div>
<svg style="left:687px;top:453.5px" width="8" height="8"><path d="M4 .5v7M.5 4h7" stroke="#444" stroke-width="0.9"/></svg>

<div class="a" style="left:548px;top:147.2px;width:135px;height:301.4px;background:#f7f8fa;"></div>
<div class="a" style="left:548px;top:147.2px;width:0.8px;height:301.4px;background:#e6e7ea;"></div>
<div class="t" style="left:552.70px;top:149.92px;font-size:6px;color:#666;">Slide Transition</div>
<svg style="left:595px;top:152.5px" width="4" height="3"><path d="M0 0h3L1.5 2z" fill="#777"/></svg>
<svg style="left:656.5px;top:148.5px" width="8" height="8"><path d="M1 6.5h6M2 6.5V3.5a2 2 0 0 1 4 0v3M3.5 7.5h1" fill="none" stroke="#666" stroke-width="0.8"/></svg>
<svg style="left:669.5px;top:149px" width="7" height="7"><path d="M.5 .5l6 6M6.5 .5l-6 6" stroke="#555" stroke-width="0.9"/></svg>
<div class="t" style="left:553.80px;top:160.29px;font-size:7.1px;color:#555;letter-spacing:-0.05px;">Apply to Selected Slides</div>
<div class="a" style="left:555.5px;top:169px;width:125px;height:98px;background:#ffffff;"></div>
<div class="a" style="left:558.7px;top:170.7px;width:34.2px;height:24.9px;background:#dfe2e7;"></div>
<svg style="left:566.5px;top:171px" width="18" height="14" viewBox="0 0 18 14"><defs><linearGradient id="og" x1="0" y1="0" x2="1" y2="1"><stop offset="0" stop-color="#f9b27a"/><stop offset="1" stop-color="#ee7b35"/></linearGradient></defs><rect x="1" y="0.5" width="15" height="12" fill="#efd7c8"/></svg>
<svg style="left:608.7px;top:171px" width="18" height="14" viewBox="0 0 18 14"><defs><linearGradient id="og" x1="0" y1="0" x2="1" y2="1"><stop offset="0" stop-color="#f9b27a"/><stop offset="1" stop-color="#ee7b35"/></linearGradient></defs><rect x="2" y="1" width="14" height="12" fill="#fdf1e8" stroke="#f3d0b8" stroke-width="0.5"/><rect x="4" y="3" width="5" height="4" fill="#f28c4a"/><rect x="8" y="6" width="5" height="4" fill="#f28c4a"/></svg>
<svg style="left:650.1px;top:171px" width="18" height="14" viewBox="0 0 18 14"><defs><linearGradient id="og" x1="0" y1="0" x2="1" y2="1"><stop offset="0" stop-color="#f9b27a"/><stop offset="1" stop-color="#ee7b35"/></linearGradient></defs><rect x="4" y="2.5" width="13" height="11" fill="#fbd9c0"/><rect x="1" y="0.5" width="13" height="11" fill="url(#og)"/></svg>
<svg style="left:566.5px;top:198.3px" width="18" height="14" viewBox="0 0 18 14"><defs><linearGradient id="og" x1="0" y1="0" x2="1" y2="1"><stop offset="0" stop-color="#f9b27a"/><stop offset="1" stop-color="#ee7b35"/></linearGradient></defs><rect x="4" y="2.5" width="13" height="11" fill="#fbe3d2"/><rect x="1" y="0.5" width="13" height="11" fill="url(#og)"/></svg>
<svg style="left:608.7px;top:198.3px" width="18" height="14" viewBox="0 0 18 14"><defs><linearGradient id="og" x1="0" y1="0" x2="1" y2="1"><stop offset="0" stop-color="#f9b27a"/><stop offset="1" stop-color="#ee7b35"/></linearGradient></defs><rect x="2" y="1" width="14" height="12" fill="url(#og)"/><rect x="2" y="1" width="8" height="12" fill="#fdf0e6"/><path d="M5 7h4M5 7l1.5-1.5M5 7l1.5 1.5" stroke="#333" stroke-width="0.8"/></svg>
<svg style="left:650.1px;top:198.3px" width="18" height="14" viewBox="0 0 18 14"><defs><linearGradient id="og" x1="0" y1="0" x2="1" y2="1"><stop offset="0" stop-color="#f9b27a"/><stop offset="1" stop-color="#ee7b35"/></linearGradient></defs><rect x="2" y="1" width="14" height="12" fill="url(#og)"/><path d="M6 1h6l-1.5 12h-3z" fill="#fde6d5"/></svg>
<svg style="left:566.5px;top:224.2px" width="18" height="14" viewBox="0 0 18 14"><defs><linearGradient id="og" x1="0" y1="0" x2="1" y2="1"><stop offset="0" stop-color="#f9b27a"/><stop offset="1" stop-color="#ee7b35"/></linearGradient></defs><rect x="2" y="1" width="14" height="12" fill="#f6c9a5"/><path d="M3 2h2v2H3zM7 3h2v2H7zM11 2h2v2h-2zM4 6h2v2H4zM9 7h2v2H9zM13 6h2v2h-2zM3 10h2v2H3zM7 10h2v2H7zM12 10h2v2h-2z" fill="#ef8444"/></svg>
<svg style="left:608.7px;top:224.2px" width="18" height="14" viewBox="0 0 18 14"><defs><linearGradient id="og" x1="0" y1="0" x2="1" y2="1"><stop offset="0" stop-color="#f9b27a"/><stop offset="1" stop-color="#ee7b35"/></linearGradient></defs><rect x="2" y="1" width="14" height="12" fill="#fdf0e6"/><path d="M4 10l8-7 2 2-8 7z" fill="#f08a48"/></svg>
<svg style="left:650.1px;top:224.2px" width="18" height="14" viewBox="0 0 18 14"><defs><linearGradient id="og" x1="0" y1="0" x2="1" y2="1"><stop offset="0" stop-color="#f9b27a"/><stop offset="1" stop-color="#ee7b35"/></linearGradient></defs><rect x="2" y="1" width="14" height="12" fill="#fdf0e6"/><path d="M9 7L2 1h3zM9 7l7-6v3zM9 7l7 6h-3zM9 7L2 13v-3zM9 7V1h1.5zM9 7v6H7.5zM9 7H2V5.5zM9 7h7v1.5z" fill="#f08a48"/></svg>
<svg style="left:566.5px;top:250.60000000000002px" width="18" height="14" viewBox="0 0 18 14"><defs><linearGradient id="og" x1="0" y1="0" x2="1" y2="1"><stop offset="0" stop-color="#f9b27a"/><stop offset="1" stop-color="#ee7b35"/></linearGradient></defs><rect x="2" y="1" width="14" height="12" fill="#fdf0e6"/><path d="M2 2h14M2 4.5h14M2 7h14M2 9.5h14M2 12h14" stroke="#f08a48" stroke-width="1.4"/></svg>
<svg style="left:608.7px;top:250.60000000000002px" width="18" height="14" viewBox="0 0 18 14"><defs><linearGradient id="og" x1="0" y1="0" x2="1" y2="1"><stop offset="0" stop-color="#f9b27a"/><stop offset="1" stop-color="#ee7b35"/></linearGradient></defs><rect x="2" y="1" width="14" height="12" fill="#fdf0e6"/><path d="M2 2.5h14M4 5h12M2 7.5h14M4 10h12M2 12.5h14" stroke="#f08a48" stroke-width="1"/></svg>
<svg style="left:650.1px;top:250.60000000000002px" width="18" height="14" viewBox="0 0 18 14"><defs><linearGradient id="og" x1="0" y1="0" x2="1" y2="1"><stop offset="0" stop-color="#f9b27a"/><stop offset="1" stop-color="#ee7b35"/></linearGradient></defs><rect x="2" y="1" width="14" height="12" fill="url(#og)"/><rect x="2" y="1" width="8" height="12" fill="#fdf0e6"/><path d="M5 7h4M5 7l1.5-1.5M5 7l1.5 1.5" stroke="#333" stroke-width="0.8"/></svg>
<div class="t" style="left:275.50px;width:600px;text-align:center;top:188.05px;font-size:6.2px;color:#333;">None</div>
<div class="t" style="left:317.70px;width:600px;text-align:center;top:188.05px;font-size:6.2px;color:#333;">Morph</div>
<div class="t" style="left:359.10px;width:600px;text-align:center;top:188.05px;font-size:6.2px;color:#333;">Fade</div>
<div class="t" style="left:275.50px;width:600px;text-align:center;top:214.25px;font-size:6.2px;color:#333;">Cut</div>
<div class="t" style="left:317.70px;width:600px;text-align:center;top:214.25px;font-size:6.2px;color:#333;">Wipe</div>
<div class="t" style="left:359.10px;width:600px;text-align:center;top:214.25px;font-size:6.2px;color:#333;">Shape</div>
<div class="t" style="left:275.50px;width:600px;text-align:center;top:240.45px;font-size:6.2px;color:#333;">Dissolve</div>
<div class="t" style="left:317.70px;width:600px;text-align:center;top:240.45px;font-size:6.2px;color:#333;">News</div>
<div class="t" style="left:359.10px;width:600px;text-align:center;top:240.45px;font-size:6.2px;color:#333;">Wheel</div>
<div class="a" style="left:555.5px;top:267px;width:125px;height:3px;background:#f7f8fa;"></div>
<div class="t" style="left:553.80px;top:273.07px;font-size:7.6px;color:#555;letter-spacing:-0.05px;">Modify transition</div>
<div class="t" style="left:555.00px;top:289.72px;font-size:6px;color:#333;">Effect Options:</div>
<div class="a" style="left:595.4px;top:282.6px;width:85px;height:18.7px;background:#fff;border:0.8px solid #e2e3e6;"></div>
<div class="a" style="left:598px;top:285px;width:14px;height:13px;background:#f4f4f5;"></div>
<div class="t" style="left:622.50px;top:289.72px;font-size:6px;color:#aaa;">None</div>
<svg style="left:675.5px;top:290px" width="4" height="3"><path d="M0 0h3.5L1.75 2z" fill="#666"/></svg>
<div class="t" style="left:554.50px;top:306.42px;font-size:6px;color:#333;">Speed:</div>
<div class="a" style="left:575.5px;top:305px;width:105px;height:9.8px;background:#fff;border:0.8px solid #e2e3e6;"></div>
<div class="t" style="left:578.00px;top:306.72px;font-size:6px;color:#333;">00.50</div>
<div class="t" style="left:554.50px;top:319.92px;font-size:6px;color:#333;">Sound:</div>
<div class="a" style="left:575.5px;top:318.3px;width:105px;height:9px;background:#fff;border:0.8px solid #e2e3e6;"></div>
<div class="t" style="left:578.00px;top:320.22px;font-size:6px;color:#333;">[No Sound]</div>
<svg style="left:677.5px;top:322px" width="3" height="2"><path d="M0 0h3L1.5 2z" fill="#666"/></svg>
<div class="a" style="left:554.5px;top:332px;width:6px;height:6px;background:#fff;border:0.8px solid #d6d6d6;"></div>
<div class="t" style="left:563.00px;top:332.22px;font-size:6px;color:#aaa;">Loop until next sound</div>
<div class="t" style="left:554.00px;top:345.67px;font-size:7.0px;color:#555;">Advance slide</div>
<div class="a" style="left:554.3px;top:355.3px;width:6.5px;height:6.5px;background:#fff;border:0.8px solid #555;"></div>
<svg style="left:555.0999999999999px;top:356.1px" width="5" height="5"><path d="M.5 2.5l1.5 1.5L4.5 .8" fill="none" stroke="#222" stroke-width="0.9"/></svg>
<div class="t" style="left:563.00px;top:355.92px;font-size:6px;color:#222;">Click to change slides</div>
<div class="a" style="left:554.3px;top:366.2px;width:6.5px;height:6.5px;background:#fff;border:0.8px solid #555;"></div>
<div class="t" style="left:563.00px;top:366.72px;font-size:6px;color:#222;">Auto, interval:</div>
<div class="a" style="left:602px;top:365px;width:38px;height:9.3px;background:#fff;border:0.8px solid #e2e3e6;"></div>
<div class="t" style="left:605.00px;top:366.82px;font-size:6px;color:#333;">00:00</div>
<svg style="left:634px;top:366px" width="4" height="8"><path d="M.5 2.5L2 1l1.5 1.5M.5 5.5L2 7l1.5-1.5" fill="none" stroke="#555" stroke-width="0.7"/></svg>
<div class="a" style="left:553.9px;top:377.9px;width:58.6px;height:11.2px;background:#fbfbfc;border:0.8px solid #e1e2e5;"></div>
<div class="t" style="left:283.20px;width:600px;text-align:center;top:380.62px;font-size:6px;color:#333;">Rehearse This Slide</div>
<div class="a" style="left:554px;top:394.6px;width:53.6px;height:11.3px;background:#fbfbfc;border:0.8px solid #e1e2e5;"></div>
<div class="t" style="left:280.80px;width:600px;text-align:center;top:397.37px;font-size:6px;color:#333;">Apply to Master</div>
<div class="a" style="left:554px;top:408.4px;width:64px;height:11.9px;background:#fbfbfc;border:0.8px solid #e1e2e5;"></div>
<div class="t" style="left:286.00px;width:600px;text-align:center;top:411.47px;font-size:6px;color:#333;">Apply to All</div>
<div class="a" style="left:554px;top:422px;width:35.3px;height:11.2px;background:#fbfbfc;border:0.8px solid #e1e2e5;"></div>
<div class="t" style="left:277.00px;width:600px;text-align:center;top:424.72px;font-size:6px;color:#aaa;">Play</div>
<svg style="left:562px;top:424.5px" width="7" height="7"><circle cx="3.5" cy="3.5" r="3" fill="none" stroke="#aaa" stroke-width="0.7"/><path d="M2.7 2v3l2.3-1.5z" fill="#aaa"/></svg>
<div class="a" style="left:592.2px;top:422px;width:51.8px;height:11.2px;background:#fbfbfc;border:0.8px solid #e1e2e5;"></div>
<div class="t" style="left:323.50px;width:600px;text-align:center;top:424.72px;font-size:6px;color:#333;">Slide Show</div>
<svg style="left:597.5px;top:423.5px" width="10" height="9"><rect x=".5" y=".5" width="8" height="6" fill="none" stroke="#666" stroke-width="0.7"/><circle cx="5" cy="5" r="2.6" fill="#f0703a"/><path d="M4.3 3.8v2.4l2-1.2z" fill="#fff"/></svg>
<div class="a" style="left:554.3px;top:439px;width:6.5px;height:6.5px;background:#fff;border:0.8px solid #555;"></div>
<svg style="left:555.0999999999999px;top:439.8px" width="5" height="5"><path d="M.5 2.5l1.5 1.5L4.5 .8" fill="none" stroke="#222" stroke-width="0.9"/></svg>
<div class="t" style="left:563.00px;top:439.42px;font-size:6px;color:#222;">AutoPreview</div>
<div class="a" style="left:683px;top:147.2px;width:14px;height:301.4px;background:#f4f5f7;"></div>
<div class="a" style="left:683px;top:159px;width:14px;height:15.7px;background:#e2e4e9;"></div>
<svg style="left:686px;top:161.5px" width="9" height="9"><path d="M.5 .5h6v4h-6zM2.5 4.5v4h6v-6h-2" fill="none" stroke="#555" stroke-width="0.8"/></svg>
<svg style="left:686px;top:180.5px" width="9" height="9"><path d="M6 .5l2.5 2.5-3 3-2.5-.5-.5-2.5zM3 6l-2.5 2.5" fill="none" stroke="#666" stroke-width="0.8"/></svg>
<svg style="left:686px;top:199px" width="9" height="9"><path d="M.5 2h8M.5 6.5h8M3 .5v3M6 5v3" fill="none" stroke="#666" stroke-width="0.8"/></svg>
<svg style="left:686px;top:217.5px" width="9" height="9"><circle cx="4.8" cy="4.5" r="3.6" fill="none" stroke="#666" stroke-width="0.8"/><path d="M4.8 2.5v2h1.5M.8 3l.5 1.5 1.3-1" fill="none" stroke="#666" stroke-width="0.8"/></svg>
<svg style="left:686px;top:236px" width="9" height="9"><circle cx="4.5" cy="4.5" r="3.8" fill="none" stroke="#666" stroke-width="0.8"/><path d="M3.3 3.5a1.2 1.2 0 1 1 1.5 1.2v.8M4.8 6.5v.5" fill="none" stroke="#666" stroke-width="0.7"/></svg>
<svg style="left:686px;top:435px" width="9" height="9"><circle cx="2.3" cy="2.3" r="1.8" fill="none" stroke="#aaa" stroke-width="0.7"/><circle cx="6.7" cy="2.3" r="1.8" fill="none" stroke="#aaa" stroke-width="0.7"/><circle cx="2.3" cy="6.7" r="1.8" fill="none" stroke="#aaa" stroke-width="0.7"/><circle cx="6.7" cy="6.7" r="1.8" fill="none" stroke="#aaa" stroke-width="0.7"/></svg>

<div class="a" style="left:147.5px;top:155.5px;width:352.2px;height:264px;background:#ffffff;box-shadow:0 0 2px rgba(0,0,0,0.12);"></div>
<svg style="left:147.5px;top:155.5px" width="352.2" height="264" viewBox="147.5 155.5 352.2 264">
<defs>
<linearGradient id="gsw" x1="0" y1="0" x2="0" y2="1">
<stop offset="0" stop-color="#5ae8e0"/><stop offset="0.15" stop-color="#58dc90"/><stop offset="0.4" stop-color="#22c640"/><stop offset="0.75" stop-color="#17a82c"/><stop offset="1" stop-color="#0a5a14"/></linearGradient>
<linearGradient id="gor" x1="0" y1="0" x2="1" y2="0">
<stop offset="0" stop-color="#3a2005"/><stop offset="0.25" stop-color="#e8a828"/><stop offset="0.5" stop-color="#fff0b0"/><stop offset="0.8" stop-color="#f8c040"/><stop offset="1" stop-color="#f07a10"/></linearGradient>
<clipPath id="cslide"><rect x="147.5" y="155.5" width="352.2" height="264"/></clipPath>
<clipPath id="cpink"><rect x="323.7" y="230" width="160" height="180"/></clipPath>
<clipPath id="cgreen"><rect x="170" y="230" width="153.7" height="180"/></clipPath>
</defs>
<g id="slide3"><rect x="147.5" y="155.5" width="352.2" height="264" fill="#fff"/><g clip-path="url(#cslide)" id="swoosh">
<path d="M300 155.5 L499.7 155.5 L499.7 171 C485 163 460 159 420 158 C380 157.5 340 158 300 160.5 Z" fill="url(#gor)"/>
<path d="M481 155.5 L499.7 155.5 L499.7 165 Z" fill="#fde58a"/>
<path d="M481 155.3 L499.7 167.5 L499.7 170 L479 155.3 Z" fill="#7a1405"/>
<path d="M147.5 155.5 L322 155.5 L240 180.5 C215 188 180 194.5 147.5 196.5 Z" fill="url(#gsw)"/>
<path d="M147.5 169.5 C190 166 250 163 318 160" stroke="#f0fff4" stroke-width="1.5" fill="none" opacity="0.9"/>
<path d="M147.5 188 C190 184 230 177 270 170" stroke="#0d7a1e" stroke-width="1" fill="none" opacity="0.7"/>
<path d="M190 191 C210 188 225 184.5 240 180.5 L322 156" stroke="#061a08" stroke-width="2" fill="none"/>
<path d="M318 156.5 C335 156.5 350 157 370 157.5" stroke="#2a1505" stroke-width="2.5" fill="none"/>
</g>
<rect x="200.2" y="185.1" width="276.6" height="49.7" fill="#3da792"/>
<text x="337.9" y="213.6" text-anchor="middle" font-family="Liberation Serif" font-weight="bold" font-size="13.75" fill="#f4fbf9">BACTEROPHAGES- FRIEND TO FOE</text>
<rect x="175" y="243" width="297.6" height="150.8" rx="14" fill="#ddefd9" stroke="#8fb58a" stroke-width="0.9"/>
<g clip-path="url(#cpink)"><rect x="175" y="243" width="297.6" height="150.8" rx="14" fill="#f6dcd7" stroke="#cda39d" stroke-width="0.9"/></g>
<line x1="323.7" y1="243" x2="323.7" y2="393.8" stroke="#d8b0aa" stroke-width="0.6"/>
<text x="256.3" y="252" text-anchor="middle" font-family="Liberation Sans" font-weight="bold" font-size="6.9" fill="#2c3a2c">Bacteriophriend</text>
<text x="396" y="252.4" text-anchor="middle" font-family="Liberation Sans" font-weight="bold" font-size="6.9" fill="#c2473a">Bacteriophoe</text>
<rect x="180.8" y="264.6" width="46.5" height="12.899999999999977" rx="6.449999999999989" fill="#fff" stroke="#333" stroke-width="0.7"/>
<text x="204.05" y="270.34" text-anchor="middle" font-family="Liberation Sans" font-size="4.3" fill="#222">Farm to fork</text>
<text x="204.05" y="274.86" text-anchor="middle" font-family="Liberation Sans" font-size="4.3" fill="#222">application</text>
<rect x="232.2" y="264.6" width="36.80000000000001" height="12.899999999999977" rx="6.449999999999989" fill="#fff" stroke="#333" stroke-width="0.7"/>
<text x="250.6" y="270.34" text-anchor="middle" font-family="Liberation Sans" font-size="4.3" fill="#222">Phage</text>
<text x="250.6" y="274.86" text-anchor="middle" font-family="Liberation Sans" font-size="4.3" fill="#222">engineering</text>
<rect x="277" y="264.6" width="27.399999999999977" height="12.899999999999977" rx="6.449999999999989" fill="#fff" stroke="#333" stroke-width="0.7"/>
<text x="290.7" y="270.34" text-anchor="middle" font-family="Liberation Sans" font-size="4.3" fill="#222">Phage</text>
<text x="290.7" y="274.86" text-anchor="middle" font-family="Liberation Sans" font-size="4.3" fill="#222">therapy</text>
<rect x="177.5" y="316.3" width="52.30000000000001" height="6.699999999999989" rx="3.3499999999999943" fill="#fff" stroke="#333" stroke-width="0.7"/>
<text x="203.65" y="321.20" text-anchor="middle" font-family="Liberation Sans" font-size="4.3" fill="#222">Biofilm removal</text>
<rect x="182.4" y="360.6" width="33.19999999999999" height="5.7999999999999545" rx="2.8999999999999773" fill="#fff" stroke="#333" stroke-width="0.7"/>
<text x="199.0" y="365.05" text-anchor="middle" font-family="Liberation Sans" font-size="4.3" fill="#222">Auto dosing</text>
<rect x="224.8" y="382.2" width="30.69999999999999" height="6.600000000000023" rx="3.3000000000000114" fill="#fff" stroke="#333" stroke-width="0.7"/>
<text x="240.15" y="387.05" text-anchor="middle" font-family="Liberation Sans" font-size="4.3" fill="#222">Detection</text>
<rect x="429" y="256" width="37.60000000000002" height="12.5" rx="6.25" fill="#fff" stroke="#333" stroke-width="0.7"/>
<text x="447.8" y="261.54" text-anchor="middle" font-family="Liberation Sans" font-size="4.3" fill="#222">Bacteriophage</text>
<text x="447.8" y="266.06" text-anchor="middle" font-family="Liberation Sans" font-size="4.3" fill="#222">resistance</text>
<rect x="383.6" y="295.9" width="75.39999999999998" height="5.400000000000034" rx="2.700000000000017" fill="#fff" stroke="#333" stroke-width="0.7"/>
<text x="421.3" y="300.26" text-anchor="middle" font-family="Liberation Sans" font-size="4.6" fill="#222">Increased biofilm production</text>
<rect x="435" y="346.8" width="34.19999999999999" height="12.800000000000011" rx="6.400000000000006" fill="#fff" stroke="#333" stroke-width="0.7"/>
<text x="452.1" y="352.49" text-anchor="middle" font-family="Liberation Sans" font-size="4.3" fill="#222">Antimicrobial</text>
<text x="452.1" y="357.01" text-anchor="middle" font-family="Liberation Sans" font-size="4.3" fill="#222">resistance</text>
<rect x="334.8" y="381.9" width="39.39999999999998" height="6.0" rx="3.0" fill="#fff" stroke="#333" stroke-width="0.7"/>
<text x="354.5" y="386.45" text-anchor="middle" font-family="Liberation Sans" font-size="4.3" fill="#222">Lysogenization</text>
<rect x="387.9" y="381.9" width="35.900000000000034" height="6.0" rx="3.0" fill="#fff" stroke="#333" stroke-width="0.7"/>
<text x="405.85" y="386.45" text-anchor="middle" font-family="Liberation Sans" font-size="4.3" fill="#222">Transduction</text>
<rect x="180.8" y="282" width="47.6" height="24" rx="2" fill="#fbfbfb" stroke="#d8e4d4" stroke-width="0.6"/>
<ellipse cx="195" cy="289" rx="5" ry="3" fill="#e9c4c0"/><path d="M185 300 l3 -8 4 2 -2 8z" fill="#d9d0cc"/><ellipse cx="199" cy="296" rx="5" ry="3" fill="#eee"/><path d="M196 294h2v3h-2zM200 295h2v2h-2z" fill="#333"/><rect x="205" y="296" width="2" height="1" fill="#555"/><ellipse cx="216" cy="296" rx="4" ry="5" fill="#e2e2e2"/><rect x="211" y="291" width="0.7" height="9" fill="#aaa"/><rect x="221" y="291" width="0.7" height="9" fill="#aaa"/>
<path d="M239.5 287 l3.5 -2.5 3.5 2.5 v3.5 l-3.5 2.5 -3.5 -2.5z" fill="#2f6b40"/><path d="M243 292v4 M239 296h8 M239 296v2 M247 296v2" stroke="#2f6b40" stroke-width="1.1" fill="none"/>
<path d="M252.5 287 l3.5 -2.5 3.5 2.5 v3.5 l-3.5 2.5 -3.5 -2.5z" fill="#2f6b40"/><path d="M256 292v4 M252 296h8 M252 296v2 M260 296v2" stroke="#2f6b40" stroke-width="1.1" fill="none"/>
<text x="249.5" y="303" text-anchor="middle" font-family="Liberation Sans" font-size="3.6" fill="#4a6a4a">Expanded</text><text x="249.5" y="307" text-anchor="middle" font-family="Liberation Sans" font-size="3.6" fill="#4a6a4a">host range</text>
<rect x="279" y="282" width="11" height="5.5" rx="2.7" fill="#5ab2d6" transform="rotate(12 284 285)"/><rect x="292" y="281" width="11" height="5.5" rx="2.7" fill="#c9c9c9" stroke="#999" stroke-width="0.4" transform="rotate(-18 297 284)"/>
<path d="M288 289l1 2M291 289v2M294 289l-1 2" stroke="#555" stroke-width="0.5"/>
<circle cx="291" cy="295" r="1.8" fill="#3a3a3a"/><path d="M287.5 303l1-5h5l1 5h-1.5v5h-1.3v-4h-0.4v4h-1.3v-5z" fill="#3a3a3a"/>
<path d="M313.5 287.5 L323.7 282 L333.9 287.5 V297.5 L323.7 303 L313.5 297.5Z" fill="#3f7f52"/>
<g clip-path="url(#cpink)"><path d="M313.5 287.5 L323.7 282 L333.9 287.5 V297.5 L323.7 303 L313.5 297.5Z" fill="#c75044"/></g>
<path d="M322.9 302v44" stroke="#3f7f52" stroke-width="1.5"/><path d="M324.5 302v44" stroke="#c75044" stroke-width="1.5"/>
<path d="M322.5 309.5 L309 313 L302.5 326 M322.5 312.5 L312 318.5 L307.5 328.5 M322.5 315.5 L315.5 322.5 L313 330" stroke="#3f7f52" stroke-width="1.2" fill="none" stroke-linejoin="round"/>
<path d="M325 309.5 L338.4 313 L344.9 326 M325 312.5 L335.4 318.5 L339.9 328.5 M325 315.5 L331.9 322.5 L334.4 330" stroke="#c75044" stroke-width="1.2" fill="none" stroke-linejoin="round"/>
<rect x="240" y="327" width="165.5" height="47.5" rx="23.7" fill="#f6f2f8" stroke="#9470b4" stroke-width="4.5"/>
<rect x="240" y="327" width="165.5" height="47.5" rx="23.7" fill="none" stroke="#c9b3dc" stroke-width="1"/>
<rect x="243.5" y="330.5" width="158.5" height="40.5" rx="20" fill="#f8f5fa" stroke="#b79ccd" stroke-width="0.7"/>
<path d="M322.9 324v20" stroke="#3f7f52" stroke-width="1.3"/><path d="M324.5 324v20" stroke="#c75044" stroke-width="1.3"/>
<path d="M323 344 q-2.5 4 1 8 q2.5 4 -1 8 q-2 3 0 6" stroke="#c75044" stroke-width="0.9" fill="none"/><path d="M324.5 344 q2.5 4 -1 8 q-2.5 4 1 8 q2 3 0 6" stroke="#3f7f52" stroke-width="0.9" fill="none"/>
<path d="M322 352 l-4 6 M321 360 l-10 10" stroke="#444" stroke-width="0.5"/>
<path d="M244 330 l4 -4 3 3 4 -3 2 4 5 0 -1 5 4 3 -4 3 2 4 -5 1 -1 4 -4 -2 -4 3 -2 -4 -5 -1 2 -4 -3 -3 4 -2z" fill="#fdfdfd" stroke="#ccc" stroke-width="0.5"/>
<text x="246.5" y="325" text-anchor="middle" font-family="Liberation Sans" font-size="3.6" fill="#666">Depolymerase</text>
<path d="M244 356 l5 -5 4 4 5 -2 1 5 5 2 -4 4 2 5 -5 0 -2 4 -4 -3 -4 2 -1 -5 -5 -1 3 -4z" fill="#fdfdfd" stroke="#ccc" stroke-width="0.5"/>
<circle cx="241" cy="336" r="2.6" fill="#5c5c5c"/>
<circle cx="253" cy="339" r="2.6" fill="#5c5c5c"/>
<circle cx="241" cy="350" r="1.8" fill="#f2c020"/><circle cx="255.5" cy="366" r="1.8" fill="#f2c020"/>
<path d="M178.5 334 C180 329 188 326.5 197 327 C205 325 215 326 221 329.5 C227 333 225 340 218 342.5 C210 345.5 199 346.5 191 344.5 C183 343 176.5 339.5 178.5 334Z" fill="#3a5d96"/>
<path d="M184 333 l8-4 6 3-6 5z" fill="#1d3b48"/><path d="M195 331 l9-3 5 4-8 4z" fill="#2aa08a"/><path d="M204 336 l9-4 5 4-9 3z" fill="#1d3b48"/><path d="M190 338 l7-1 4 4-7 2z" fill="#2a7f8a"/><path d="M196 334 l5-2 3 3-5 2z" fill="#e3707a"/><path d="M210 331 l5-1 2 3-5 1z" fill="#5abf8a"/><path d="M201 340 l5-1 2 3-5 1z" fill="#e3707a"/><path d="M214 338 l5-1 3 3-5 1z" fill="#3a9ad0"/>
<circle cx="210.5" cy="323.8" r="2.3" fill="#5a5a5a"/><path d="M210.5 323.8 l2.4 -1 v2z" fill="#ddefd9"/>
<circle cx="222.5" cy="335.5" r="2.3" fill="#5a5a5a"/><path d="M222.5 335.5 l2.4 -1 v2z" fill="#ddefd9"/>
<circle cx="216" cy="343" r="2.3" fill="#5a5a5a"/><path d="M216 343 l2.4 -1 v2z" fill="#ddefd9"/>
<circle cx="203" cy="347" r="2.3" fill="#5a5a5a"/><path d="M203 347 l2.4 -1 v2z" fill="#ddefd9"/>
<circle cx="185.5" cy="341.5" r="2.3" fill="#5a5a5a"/><path d="M185.5 341.5 l2.4 -1 v2z" fill="#ddefd9"/>
<circle cx="196" cy="325.5" r="2.3" fill="#5a5a5a"/><path d="M196 325.5 l2.4 -1 v2z" fill="#ddefd9"/>
<circle cx="228" cy="357" r="2.2" fill="#2f6b40"/>
<circle cx="237" cy="365" r="2.2" fill="#2f6b40"/>
<circle cx="229" cy="370" r="2.2" fill="#2f6b40"/>
<circle cx="244" cy="372" r="2.2" fill="#2f6b40"/>
<path d="M228 357l6 4 3 4M229 370l5-5 8 2" stroke="#7aa88a" stroke-width="0.6" fill="none"/>
<circle cx="278" cy="340" r="2.6" fill="#cfe9e3" stroke="#7fbcae" stroke-width="0.6"/>
<circle cx="283" cy="346" r="2.6" fill="#cfe9e3" stroke="#7fbcae" stroke-width="0.6"/>
<circle cx="273" cy="358" r="2.6" fill="#cfe9e3" stroke="#7fbcae" stroke-width="0.6"/>
<circle cx="283" cy="357" r="2.6" fill="#cfe9e3" stroke="#7fbcae" stroke-width="0.6"/>
<circle cx="295" cy="358" r="2.6" fill="#cfe9e3" stroke="#7fbcae" stroke-width="0.6"/>
<circle cx="305" cy="358" r="2.6" fill="#cfe9e3" stroke="#7fbcae" stroke-width="0.6"/>
<ellipse cx="305" cy="339" rx="4" ry="1.8" fill="#9fd3ea"/><ellipse cx="303" cy="345" rx="4" ry="1.8" fill="#9fd3ea"/>
<path d="M287 340h4M296 339h4M282 349v3M297 349v3M272 337v5M275 336v5M265 363h4" stroke="#666" stroke-width="0.6"/>
<text x="298" y="366" text-anchor="middle" font-family="Liberation Sans" font-size="3.6" fill="#555">Luciferase</text>
<path d="M295 367 l4 -3 3 3 4 -2 1 4 4 2 -3 3 2 4 -4 0 -2 3 -3 -2 -4 2 -1 -4 -4 -1 3 -3z" fill="#fdfdfd" stroke="#ccc" stroke-width="0.4"/><circle cx="300" cy="372" r="2.5" fill="#cfe9e3" stroke="#7fbcae" stroke-width="0.6"/>
<path d="M288.5 365l1.5 4 1 -1.5 2 2" stroke="#111" stroke-width="0.8" fill="#fff"/>
<path d="M267.5 381 l1.2 2.4 2.6 -.6 -.8 2.6 2 1.8 -2.6 .6 -.2 2.6 -2.2 -1.4 -2.2 1.4 -.2 -2.6 -2.6 -.6 2 -1.8 -.8 -2.6 2.6 .6z" fill="#f2c21e"/>
<path d="M273 385h5" stroke="#444" stroke-width="0.6"/>
<ellipse cx="283" cy="385" rx="3" ry="2.5" fill="#d9eef5" stroke="#6a9ab0" stroke-width="0.5"/><ellipse cx="292" cy="385" rx="3" ry="2.5" fill="#d9eef5" stroke="#6a9ab0" stroke-width="0.5"/><rect x="284" y="384" width="2.5" height="2" fill="#3a4a9a"/><rect x="293" y="384" width="2.5" height="2" fill="#3a4a9a"/>
<text x="293" y="391.5" text-anchor="middle" font-family="Liberation Sans" font-size="3.5" fill="#333">Luciferase + substrate</text>
<rect x="371.6" y="271.4" width="92.4" height="18.8" rx="9.4" fill="#c7bde2" stroke="#9a88c4" stroke-width="0.8"/>
<circle cx="378" cy="279.5" r="3.5" fill="#fff" stroke="#666" stroke-width="0.5"/><circle cx="393" cy="282" r="1.7" fill="#e7bf3a"/><path d="M383 279h5M400 279h5M418 279h6M426 284l5-3" stroke="#6a5a8a" stroke-width="0.5"/>
<path d="M404 274l3 4 3-4M407 278v5" stroke="#4a5a8a" stroke-width="0.8" fill="none"/>
<circle cx="446" cy="275" r="2.4" fill="#d0514e"/>
<circle cx="452" cy="280" r="2.4" fill="#d0514e"/>
<circle cx="444" cy="283" r="2.4" fill="#d0514e"/>
<circle cx="457" cy="285" r="2.4" fill="#d0514e"/>
<path d="M436 273l5 5M441 273l-5 5M444 283l5 4" stroke="#c04a4a" stroke-width="0.5"/>
<circle cx="388.5" cy="259.5" r="2.3" fill="#c9504a"/><path d="M386 263h5l-1 3h-3z" fill="#e9a09a"/><ellipse cx="388.5" cy="270" rx="4.5" ry="3" fill="#2f7a4a"/>
<circle cx="408" cy="262" r="2" fill="#c9504a"/><path d="M406 265h4l-.5 2h-3z" fill="#e9a09a"/>
<text x="372" y="262" text-anchor="middle" font-family="Liberation Sans" font-size="2.5" fill="#666">Adsorption</text><text x="372" y="265" text-anchor="middle" font-family="Liberation Sans" font-size="2.5" fill="#666">blocking</text>
<text x="419" y="265" text-anchor="middle" font-family="Liberation Sans" font-size="2.5" fill="#666">Abortive</text>
<circle cx="350" cy="316.5" r="2.2" fill="#b9424a"/>
<circle cx="357" cy="313" r="2.2" fill="#b9424a"/>
<circle cx="362" cy="318" r="2.2" fill="#b9424a"/>
<text x="356" y="323.5" text-anchor="middle" font-family="Liberation Sans" font-size="3.4" fill="#555">Virulence factor</text>
<ellipse cx="444" cy="318" rx="12" ry="5" fill="#d4ecd0" stroke="#bcd8b8" stroke-width="0.5"/>
<path d="M395 320 l10 -6 4 2 -10 6z M400 322 l10 -4 3 2 -10 4z M397 314 l6 -2 3 3 -6 2z" fill="#2a8a9a"/><circle cx="403" cy="316" r="1.8" fill="#d9606a"/>
<path d="M429 320 l10 -6 4 2 -10 6z M434 322 l10 -4 3 2 -10 4z M431 314 l6 -2 3 3 -6 2z" fill="#2a8a9a"/><circle cx="437" cy="316" r="1.8" fill="#d9606a"/>
<path d="M413 318h10" stroke="#666" stroke-width="0.5"/>
<circle cx="361" cy="341" r="5.5" fill="#fff" stroke="#9a5a6a" stroke-width="0.9"/>
<path d="M364 334l4 -12M371 334l12 -10M332 339h8M330 344l7 5" stroke="#444" stroke-width="0.5"/>
<path d="M389 342 l8 -8 5 3 -3 4 3 3 -5 2z" fill="#f0c21a" stroke="#b89010" stroke-width="0.4"/>
<path d="M365 353 q1.5 -5 3 0z M369.5 353 q1.5 -5 3 0z" fill="#f2c21e"/>
<text x="368" y="358" text-anchor="middle" font-family="Liberation Sans" font-size="3.2" fill="#555">Efflux pumps</text>
<circle cx="374" cy="347" r="1.1" fill="#3d9a50"/>
<circle cx="378" cy="350" r="1.1" fill="#3d9a50"/>
<circle cx="382" cy="348" r="1.1" fill="#3d9a50"/>
<circle cx="386" cy="351" r="1.1" fill="#3d9a50"/>
<circle cx="416" cy="327" r="1.1" fill="#3d9a50"/>
<circle cx="421" cy="331" r="1.1" fill="#3d9a50"/>
<circle cx="418" cy="334" r="1.1" fill="#3d9a50"/>
<circle cx="424" cy="328" r="1.1" fill="#3d9a50"/>
<circle cx="417" cy="345" r="1.1" fill="#3d9a50"/>
<circle cx="422" cy="347" r="1.1" fill="#3d9a50"/>
<circle cx="418" cy="351" r="1.1" fill="#3d9a50"/>
<text x="419" y="358" text-anchor="middle" font-family="Liberation Sans" font-size="3.2" fill="#555">Antimicrobial</text>
<circle cx="421" cy="362" r="2.6" fill="#8a2a30"/><circle cx="407" cy="372" r="2.6" fill="#8a2a30"/>
<text x="415" y="378" text-anchor="middle" font-family="Liberation Sans" font-size="3.2" fill="#555">Degrading enzymes</text>
<ellipse cx="354" cy="363.5" rx="26" ry="4" fill="#fff" stroke="#8a7ab4" stroke-width="0.7"/><path d="M331 360 q-3 3 1 6" stroke="#c04a4a" stroke-width="1" fill="none"/>
<text x="354" y="365" text-anchor="middle" font-family="Liberation Sans" font-weight="bold" font-size="3.4" fill="#222">Bacterial chromosome</text>
<path d="M350 376l-3 5M380 374l10 7" stroke="#444" stroke-width="0.5"/>
</g></svg>

<div class="a" style="left:25.599999999999998px;top:167.7px;width:72.1px;height:54.4px;background:#dcdde0;"></div>
<svg style="left:26.4px;top:168.5px" width="70.5" height="52.8" viewBox="0 0 70.5 52.8">
<defs><clipPath id="ct1"><rect width="70.5" height="52.8"/></clipPath></defs>
<g clip-path="url(#ct1)">
<rect width="70.5" height="52.8" fill="#3f4c62"/>
<polygon points="0,52.8 0,12.0 4,12.9 8,13.8 12,14.9 16,16.1 20,17.4 24,18.9 28,20.4 32,22.1 36,23.9 40,25.8 44,27.8 48,29.9 52,32.1 56,34.5 60,37.0 64,39.5 68,42.2 72,45.1 76,52.8" fill="#4654b8"/>
<circle cx="44.1" cy="40.1" r="2.5" fill="#3a44a0"/><circle cx="9.6" cy="20.1" r="1.9" fill="#6a7af2"/><circle cx="18.7" cy="49.5" r="1.7" fill="#6a7af2"/><circle cx="8.3" cy="33.3" r="1.5" fill="#6a7af2"/><circle cx="37.9" cy="36.6" r="2.5" fill="#3a44a0"/><circle cx="12.6" cy="52.1" r="1.5" fill="#4c58c8"/><circle cx="20.3" cy="32.6" r="2.2" fill="#7e8af5"/><circle cx="2.9" cy="19.2" r="2.3" fill="#5a68e0"/><circle cx="33.6" cy="38.1" r="2.6" fill="#6a7af2"/><circle cx="44.2" cy="51.5" r="1.8" fill="#4c58c8"/><circle cx="23.5" cy="19.2" r="2.4" fill="#6a7af2"/><circle cx="41.6" cy="42.2" r="1.8" fill="#4c58c8"/><circle cx="43.2" cy="49.6" r="2.5" fill="#8878e8"/><circle cx="4.8" cy="37.0" r="2.4" fill="#3a44a0"/><circle cx="9.0" cy="37.2" r="1.7" fill="#6a7af2"/><circle cx="4.0" cy="32.4" r="1.5" fill="#3a44a0"/><circle cx="42.0" cy="44.6" r="2.0" fill="#6a7af2"/><circle cx="2.3" cy="22.7" r="2.5" fill="#8878e8"/><circle cx="61.1" cy="52.7" r="2.0" fill="#3a44a0"/><circle cx="36.1" cy="29.6" r="1.6" fill="#7e8af5"/><circle cx="49.4" cy="35.9" r="1.9" fill="#3a44a0"/><circle cx="47.5" cy="45.1" r="2.6" fill="#3a44a0"/><circle cx="19.7" cy="51.1" r="2.1" fill="#6a7af2"/><circle cx="33.1" cy="41.8" r="1.8" fill="#7e8af5"/><circle cx="23.7" cy="34.8" r="2.4" fill="#7e8af5"/><circle cx="8.5" cy="52.9" r="1.9" fill="#4c58c8"/><circle cx="28.8" cy="33.3" r="2.1" fill="#4c58c8"/><circle cx="20.4" cy="29.9" r="1.8" fill="#6a7af2"/><circle cx="12.5" cy="31.7" r="1.7" fill="#3a44a0"/><circle cx="11.4" cy="38.8" r="2.6" fill="#5a68e0"/><circle cx="-2.0" cy="21.9" r="2.0" fill="#6a7af2"/><circle cx="35.9" cy="51.4" r="1.9" fill="#5a68e0"/><circle cx="29.0" cy="43.9" r="1.9" fill="#5a68e0"/><circle cx="9.6" cy="20.7" r="1.7" fill="#5a68e0"/><circle cx="26.1" cy="51.9" r="2.2" fill="#7e8af5"/><circle cx="-0.5" cy="51.0" r="2.5" fill="#5a68e0"/><circle cx="18.3" cy="50.5" r="1.8" fill="#7e8af5"/><circle cx="60.4" cy="39.0" r="2.0" fill="#4c58c8"/><circle cx="36.3" cy="46.6" r="2.5" fill="#6a7af2"/><circle cx="31.7" cy="49.5" r="2.1" fill="#6a7af2"/><circle cx="29.8" cy="43.6" r="2.3" fill="#3a44a0"/><circle cx="46.0" cy="46.4" r="2.0" fill="#3a44a0"/><circle cx="55.8" cy="49.2" r="2.0" fill="#8878e8"/><circle cx="63.8" cy="52.5" r="2.0" fill="#8878e8"/><circle cx="58.6" cy="42.8" r="1.5" fill="#3a44a0"/><circle cx="43.5" cy="44.5" r="2.5" fill="#7e8af5"/><circle cx="11.7" cy="43.3" r="1.7" fill="#8878e8"/><circle cx="6.0" cy="20.5" r="1.6" fill="#8878e8"/><circle cx="6.8" cy="21.5" r="1.5" fill="#6a7af2"/><circle cx="21.3" cy="32.4" r="2.5" fill="#7e8af5"/><circle cx="40.1" cy="36.6" r="2.5" fill="#8878e8"/><circle cx="16.8" cy="40.5" r="1.6" fill="#5a68e0"/><circle cx="35.5" cy="24.5" r="2.0" fill="#7e8af5"/><circle cx="6.0" cy="28.7" r="1.9" fill="#5a68e0"/><circle cx="25.8" cy="45.1" r="2.5" fill="#3a44a0"/><circle cx="23.8" cy="20.8" r="2.4" fill="#3a44a0"/><circle cx="19.9" cy="34.1" r="1.9" fill="#6a7af2"/><circle cx="41.9" cy="31.0" r="1.9" fill="#6a7af2"/><circle cx="34.3" cy="50.6" r="1.9" fill="#4c58c8"/><circle cx="32.8" cy="48.0" r="2.0" fill="#4c58c8"/><circle cx="3.3" cy="46.9" r="2.0" fill="#8878e8"/><circle cx="16.8" cy="15.0" r="1.8" fill="#5a68e0"/><circle cx="0.5" cy="48.4" r="2.3" fill="#7e8af5"/><circle cx="32.9" cy="51.1" r="2.2" fill="#7e8af5"/><circle cx="0.5" cy="38.6" r="2.2" fill="#8878e8"/><circle cx="27.7" cy="52.6" r="1.8" fill="#4c58c8"/><circle cx="32.6" cy="41.9" r="1.7" fill="#6a7af2"/><circle cx="34.3" cy="50.5" r="1.8" fill="#6a7af2"/><circle cx="34.8" cy="42.2" r="2.4" fill="#4c58c8"/><circle cx="27.8" cy="28.7" r="1.8" fill="#6a7af2"/><circle cx="4.4" cy="53.2" r="1.6" fill="#3a44a0"/><circle cx="34.0" cy="30.9" r="2.2" fill="#3a44a0"/><circle cx="-1.1" cy="40.8" r="2.5" fill="#5a68e0"/><circle cx="7.8" cy="29.0" r="2.3" fill="#4c58c8"/><circle cx="56.9" cy="47.7" r="1.6" fill="#7e8af5"/><circle cx="26.1" cy="41.5" r="1.8" fill="#5a68e0"/><circle cx="46.5" cy="51.6" r="2.3" fill="#7e8af5"/><circle cx="5.9" cy="43.5" r="1.9" fill="#7e8af5"/><circle cx="7.6" cy="19.3" r="2.5" fill="#8878e8"/><circle cx="-0.8" cy="28.5" r="1.7" fill="#7e8af5"/><circle cx="-1.1" cy="31.6" r="2.3" fill="#6a7af2"/><circle cx="17.8" cy="32.7" r="1.7" fill="#4c58c8"/><circle cx="30.7" cy="41.4" r="2.1" fill="#4c58c8"/><circle cx="0.4" cy="31.2" r="2.5" fill="#4c58c8"/><circle cx="20.4" cy="27.9" r="2.4" fill="#7e8af5"/><circle cx="60.2" cy="45.9" r="1.9" fill="#5a68e0"/><circle cx="4.9" cy="21.4" r="1.8" fill="#5a68e0"/><circle cx="56.9" cy="40.8" r="2.0" fill="#8878e8"/><circle cx="44.1" cy="43.2" r="1.5" fill="#8878e8"/><circle cx="42.8" cy="33.5" r="1.5" fill="#3a44a0"/><circle cx="0.0" cy="16.9" r="2.0" fill="#3a44a0"/><circle cx="40.9" cy="50.5" r="1.6" fill="#5a68e0"/><circle cx="40.9" cy="41.0" r="1.8" fill="#6a7af2"/><circle cx="18.3" cy="38.7" r="2.3" fill="#3a44a0"/><circle cx="57.3" cy="50.3" r="2.1" fill="#4c58c8"/><circle cx="36.2" cy="48.4" r="2.6" fill="#8878e8"/><circle cx="29.3" cy="52.3" r="1.9" fill="#3a44a0"/><circle cx="57.0" cy="43.0" r="2.5" fill="#6a7af2"/><circle cx="44.8" cy="41.4" r="1.6" fill="#8878e8"/><circle cx="44.4" cy="34.6" r="1.9" fill="#5a68e0"/><circle cx="29.5" cy="28.6" r="1.8" fill="#7e8af5"/><circle cx="4.2" cy="48.0" r="2.0" fill="#5a68e0"/><circle cx="6.6" cy="30.4" r="1.7" fill="#5a68e0"/><circle cx="8.2" cy="28.0" r="1.7" fill="#4c58c8"/><circle cx="45.7" cy="50.0" r="2.3" fill="#4c58c8"/><circle cx="6.3" cy="18.1" r="2.3" fill="#8878e8"/><circle cx="54.1" cy="39.8" r="2.4" fill="#3a44a0"/><circle cx="62.3" cy="47.0" r="2.4" fill="#5a68e0"/><circle cx="13.3" cy="20.2" r="2.2" fill="#3a44a0"/><circle cx="34.3" cy="50.6" r="1.5" fill="#4c58c8"/><circle cx="45.5" cy="41.4" r="1.6" fill="#4c58c8"/><circle cx="22.9" cy="45.8" r="1.6" fill="#4c58c8"/><circle cx="8.8" cy="52.2" r="2.0" fill="#5a68e0"/><circle cx="4.8" cy="19.2" r="1.5" fill="#5a68e0"/><circle cx="30.8" cy="25.5" r="1.8" fill="#3a44a0"/><circle cx="51.5" cy="43.9" r="2.0" fill="#4c58c8"/><circle cx="-0.9" cy="44.0" r="1.9" fill="#7e8af5"/><circle cx="18.0" cy="25.4" r="2.2" fill="#6a7af2"/><circle cx="54.9" cy="40.9" r="2.3" fill="#6a7af2"/><circle cx="64.4" cy="47.8" r="1.5" fill="#4c58c8"/><circle cx="15.5" cy="49.7" r="1.5" fill="#5a68e0"/><circle cx="19.7" cy="48.4" r="2.1" fill="#7e8af5"/><circle cx="6.2" cy="34.7" r="1.9" fill="#4c58c8"/><circle cx="-1.1" cy="20.8" r="2.2" fill="#6a7af2"/><circle cx="-1.4" cy="41.6" r="2.1" fill="#8878e8"/><circle cx="15.7" cy="37.4" r="2.4" fill="#8878e8"/><circle cx="20.0" cy="24.3" r="2.5" fill="#7e8af5"/><circle cx="39.8" cy="30.6" r="2.3" fill="#6a7af2"/><circle cx="30.5" cy="48.5" r="1.7" fill="#6a7af2"/><circle cx="31.7" cy="37.5" r="2.2" fill="#3a44a0"/><circle cx="0.9" cy="31.8" r="2.3" fill="#8878e8"/><circle cx="30.8" cy="31.2" r="2.3" fill="#3a44a0"/><circle cx="2.7" cy="36.9" r="1.6" fill="#4c58c8"/><circle cx="20.5" cy="28.3" r="2.4" fill="#3a44a0"/><circle cx="20.6" cy="24.5" r="2.5" fill="#7e8af5"/><circle cx="36.2" cy="48.7" r="1.7" fill="#5a68e0"/><circle cx="10.6" cy="27.1" r="1.9" fill="#6a7af2"/><circle cx="8.7" cy="14.5" r="2.1" fill="#5a68e0"/><circle cx="39.1" cy="35.8" r="2.4" fill="#7e8af5"/><circle cx="24.5" cy="48.0" r="2.2" fill="#3a44a0"/><circle cx="4.4" cy="43.9" r="1.6" fill="#6a7af2"/><circle cx="5.6" cy="34.1" r="2.1" fill="#6a7af2"/><circle cx="22.8" cy="41.4" r="2.4" fill="#6a7af2"/><circle cx="52.6" cy="51.7" r="2.0" fill="#6a7af2"/><circle cx="67.1" cy="51.1" r="1.6" fill="#5a68e0"/><circle cx="6.5" cy="29.0" r="2.6" fill="#8878e8"/><circle cx="31.6" cy="44.3" r="2.5" fill="#5a68e0"/><circle cx="26.3" cy="34.2" r="1.9" fill="#3a44a0"/><circle cx="19.0" cy="40.2" r="2.0" fill="#3a44a0"/><circle cx="49.4" cy="39.4" r="2.6" fill="#5a68e0"/><circle cx="16.5" cy="34.7" r="1.8" fill="#4c58c8"/><circle cx="5.8" cy="31.3" r="1.9" fill="#6a7af2"/><circle cx="38.1" cy="30.0" r="1.5" fill="#8878e8"/><circle cx="41.8" cy="34.5" r="2.5" fill="#8878e8"/><circle cx="7.8" cy="22.7" r="2.6" fill="#5a68e0"/><circle cx="0.4" cy="26.3" r="2.6" fill="#4c58c8"/><circle cx="35.4" cy="38.4" r="2.4" fill="#5a68e0"/><circle cx="40.7" cy="35.2" r="2.0" fill="#4c58c8"/><circle cx="70.1" cy="46.0" r="2.4" fill="#3a44a0"/><circle cx="5.6" cy="22.6" r="2.2" fill="#6a7af2"/><circle cx="13.2" cy="12.7" r="2.5" fill="#7e8af5"/><circle cx="25.6" cy="32.2" r="2.0" fill="#3a44a0"/><circle cx="51.8" cy="48.2" r="1.5" fill="#4c58c8"/><circle cx="5.9" cy="24.7" r="2.4" fill="#4c58c8"/><circle cx="49.7" cy="33.1" r="2.2" fill="#8878e8"/><circle cx="51.0" cy="46.0" r="1.5" fill="#4c58c8"/><circle cx="4.6" cy="11.9" r="2.0" fill="#7e8af5"/><circle cx="11.9" cy="47.1" r="2.3" fill="#6a7af2"/><circle cx="27.8" cy="24.4" r="1.5" fill="#4c58c8"/><circle cx="15.2" cy="22.8" r="2.4" fill="#3a44a0"/><circle cx="39.5" cy="44.6" r="2.3" fill="#5a68e0"/><circle cx="38.7" cy="51.7" r="1.9" fill="#6a7af2"/><circle cx="17.6" cy="30.9" r="1.9" fill="#8878e8"/><circle cx="28.5" cy="21.2" r="2.6" fill="#6a7af2"/><circle cx="3.2" cy="29.0" r="2.2" fill="#8878e8"/><circle cx="10.9" cy="18.9" r="1.5" fill="#3a44a0"/><circle cx="4.1" cy="34.6" r="2.2" fill="#6a7af2"/><circle cx="34.0" cy="47.5" r="1.8" fill="#4c58c8"/><circle cx="18.6" cy="24.3" r="2.2" fill="#5a68e0"/><circle cx="63.2" cy="44.9" r="1.6" fill="#4c58c8"/><circle cx="13.5" cy="36.8" r="1.6" fill="#4c58c8"/><circle cx="22.3" cy="37.0" r="2.5" fill="#6a7af2"/>
<g fill="#d08a6a"><circle cx="5" cy="6" r="2"/><circle cx="21" cy="9" r="1.8"/><circle cx="24" cy="15" r="1.6"/><circle cx="13" cy="30" r="1.5"/><circle cx="23" cy="27" r="1.8"/><circle cx="30" cy="43" r="1.8"/><circle cx="48" cy="46" r="1.8"/><circle cx="63" cy="47" r="2"/><circle cx="27" cy="17" r="1.6"/></g>
<rect x="26" y="5.8" width="36" height="1.3" fill="#f0f0f0"/><rect x="32" y="9" width="24" height="1.3" fill="#f0f0f0"/>
<rect x="49" y="26" width="18" height="1.8" fill="#e6e030"/>
<rect x="55" y="29.3" width="12" height="0.9" fill="#d8d8d8"/><rect x="43" y="31.8" width="24" height="0.9" fill="#d8d8d8"/><rect x="59" y="34.3" width="8" height="0.9" fill="#d8d8d8"/>
</g></svg>
<div class="a" style="left:25.599999999999998px;top:228.7px;width:72.1px;height:54.4px;background:#dcdde0;"></div>
<svg style="left:26.4px;top:229.5px" width="70.5" height="52.8" viewBox="147.5 155.5 352.2 264">
<rect x="147.5" y="155.5" width="352.2" height="264" fill="#fff"/>
<use href="#swoosh"/>
<rect x="233" y="194" width="241" height="50" fill="#3da792"/>
<rect x="290" y="214" width="125" height="9" fill="#cfeee6"/>
<rect x="171" y="247" width="150" height="175" fill="#fff" stroke="#5bb8a4" stroke-width="3"/>
<g fill="#6a6a6a"><rect x="180" y="256.0" width="115" height="5.5"/><rect x="180" y="269.5" width="130" height="5.5"/><rect x="180" y="283.0" width="130" height="5.5"/><rect x="180" y="296.5" width="115" height="5.5"/><rect x="180" y="310.0" width="130" height="5.5"/><rect x="180" y="323.5" width="130" height="5.5"/><rect x="180" y="337.0" width="115" height="5.5"/><rect x="180" y="350.5" width="130" height="5.5"/><rect x="180" y="364.0" width="130" height="5.5"/><rect x="180" y="377.5" width="115" height="5.5"/><rect x="180" y="391.0" width="130" height="5.5"/><rect x="180" y="404.5" width="130" height="5.5"/></g>
<rect x="327" y="253" width="147" height="143" fill="#f9fbf6"/>
<rect x="340" y="262" width="120" height="6" fill="#d4e0a8"/>
<rect x="395" y="290" width="22" height="20" fill="#7fc3e0"/>
<path d="M425 310 q10 -22 28 -17 q-5 20 -28 17z" fill="#6cb84a"/><rect x="405" y="330" width="36" height="28" fill="#8cc870"/>
<rect x="348" y="335" width="26" height="16" fill="#f2a878"/><rect x="338" y="300" width="18" height="24" fill="#ddd"/>
<rect x="398" y="370" width="55" height="7" fill="#7a9a7a"/>
</svg>
<div class="a" style="left:24.299999999999997px;top:291.5px;width:74.7px;height:57.6px;background:#ef8a5e;"></div>
<div class="a" style="left:25.4px;top:292.6px;width:72.5px;height:55.4px;background:#fff;"></div>
<svg style="left:26.4px;top:293.6px" width="70.5" height="53.4" viewBox="147.5 155.5 352.2 264" preserveAspectRatio="none"><use href="#slide3"/></svg>
<div class="a" style="left:25.599999999999998px;top:354.5px;width:72.1px;height:54.4px;background:#dcdde0;"></div>
<svg style="left:26.4px;top:355.3px" width="70.5" height="52.8" viewBox="147.5 155.5 352.2 264">
<rect x="147.5" y="155.5" width="352.2" height="264" fill="#fff"/>
<use href="#swoosh"/>
<text x="166" y="240" font-family="Liberation Serif" font-weight="bold" font-size="21" fill="#2a2a2a" textLength="128">INTRODUCTION</text>
<g fill="#6f7fae"><rect x="302" y="176" width="28" height="19" rx="6"/><rect x="302" y="201" width="28" height="19" rx="6"/><rect x="302" y="228" width="28" height="19" rx="6"/><rect x="302" y="255" width="28" height="19" rx="6"/>
<rect x="340" y="183" width="45" height="30" rx="3"/><rect x="340" y="222" width="45" height="22" rx="3"/><rect x="340" y="252" width="45" height="26" rx="3"/>
<ellipse cx="405" cy="198" rx="16" ry="18"/><ellipse cx="402" cy="232" rx="11" ry="13"/><path d="M428 208l9 9-9 9-9-9z"/></g>
<path d="M446 218v48h-12" stroke="#888" stroke-width="1.5" fill="none"/>
<circle cx="225" cy="335" r="62" fill="none" stroke="#eee" stroke-width="2"/>
<circle cx="193" cy="296" r="19" fill="#9a3a2a"/><circle cx="222" cy="281" r="13" fill="#2a8a3a"/><circle cx="243" cy="289" r="8" fill="#3aa050"/>
<circle cx="258" cy="310" r="23" fill="#f2a81a"/><circle cx="283" cy="302" r="11" fill="#f5b830"/>
<circle cx="178" cy="330" r="12" fill="#2a7ad0"/><circle cx="188" cy="350" r="12" fill="#2a6ac0"/><circle cx="205" cy="368" r="11" fill="#1a60b0"/>
<circle cx="272" cy="345" r="11" fill="#c84a2a"/><circle cx="255" cy="372" r="12" fill="#7a9a3a"/><circle cx="240" cy="402" r="17" fill="#5aaa3a"/><circle cx="282" cy="388" r="7" fill="#f5b870"/>
<circle cx="215" cy="332" r="11" fill="#a8b8d8"/>
<g fill="#999"><rect x="330" y="296" width="60" height="3"/><rect x="335" y="310" width="115" height="3"/><rect x="335" y="318" width="105" height="3"/><rect x="335" y="335" width="115" height="3"/><rect x="335" y="343" width="110" height="3"/><rect x="335" y="351" width="75" height="3"/><rect x="335" y="370" width="100" height="3"/><rect x="335" y="390" width="60" height="3"/><rect x="350" y="408" width="130" height="3"/></g>
</svg>
<div class="a" style="left:25.6px;top:417.2px;width:72.1px;height:14.4px;background:#dcdde0;"></div>
<div class="a" style="left:26.4px;top:418px;width:70.5px;height:13.6px;overflow:hidden;background:#fff">
<svg style="left:0;top:0" width="70.5" height="52.8" viewBox="147.5 155.5 352.2 264"><use href="#swoosh"/></svg></div>
</body></html>
